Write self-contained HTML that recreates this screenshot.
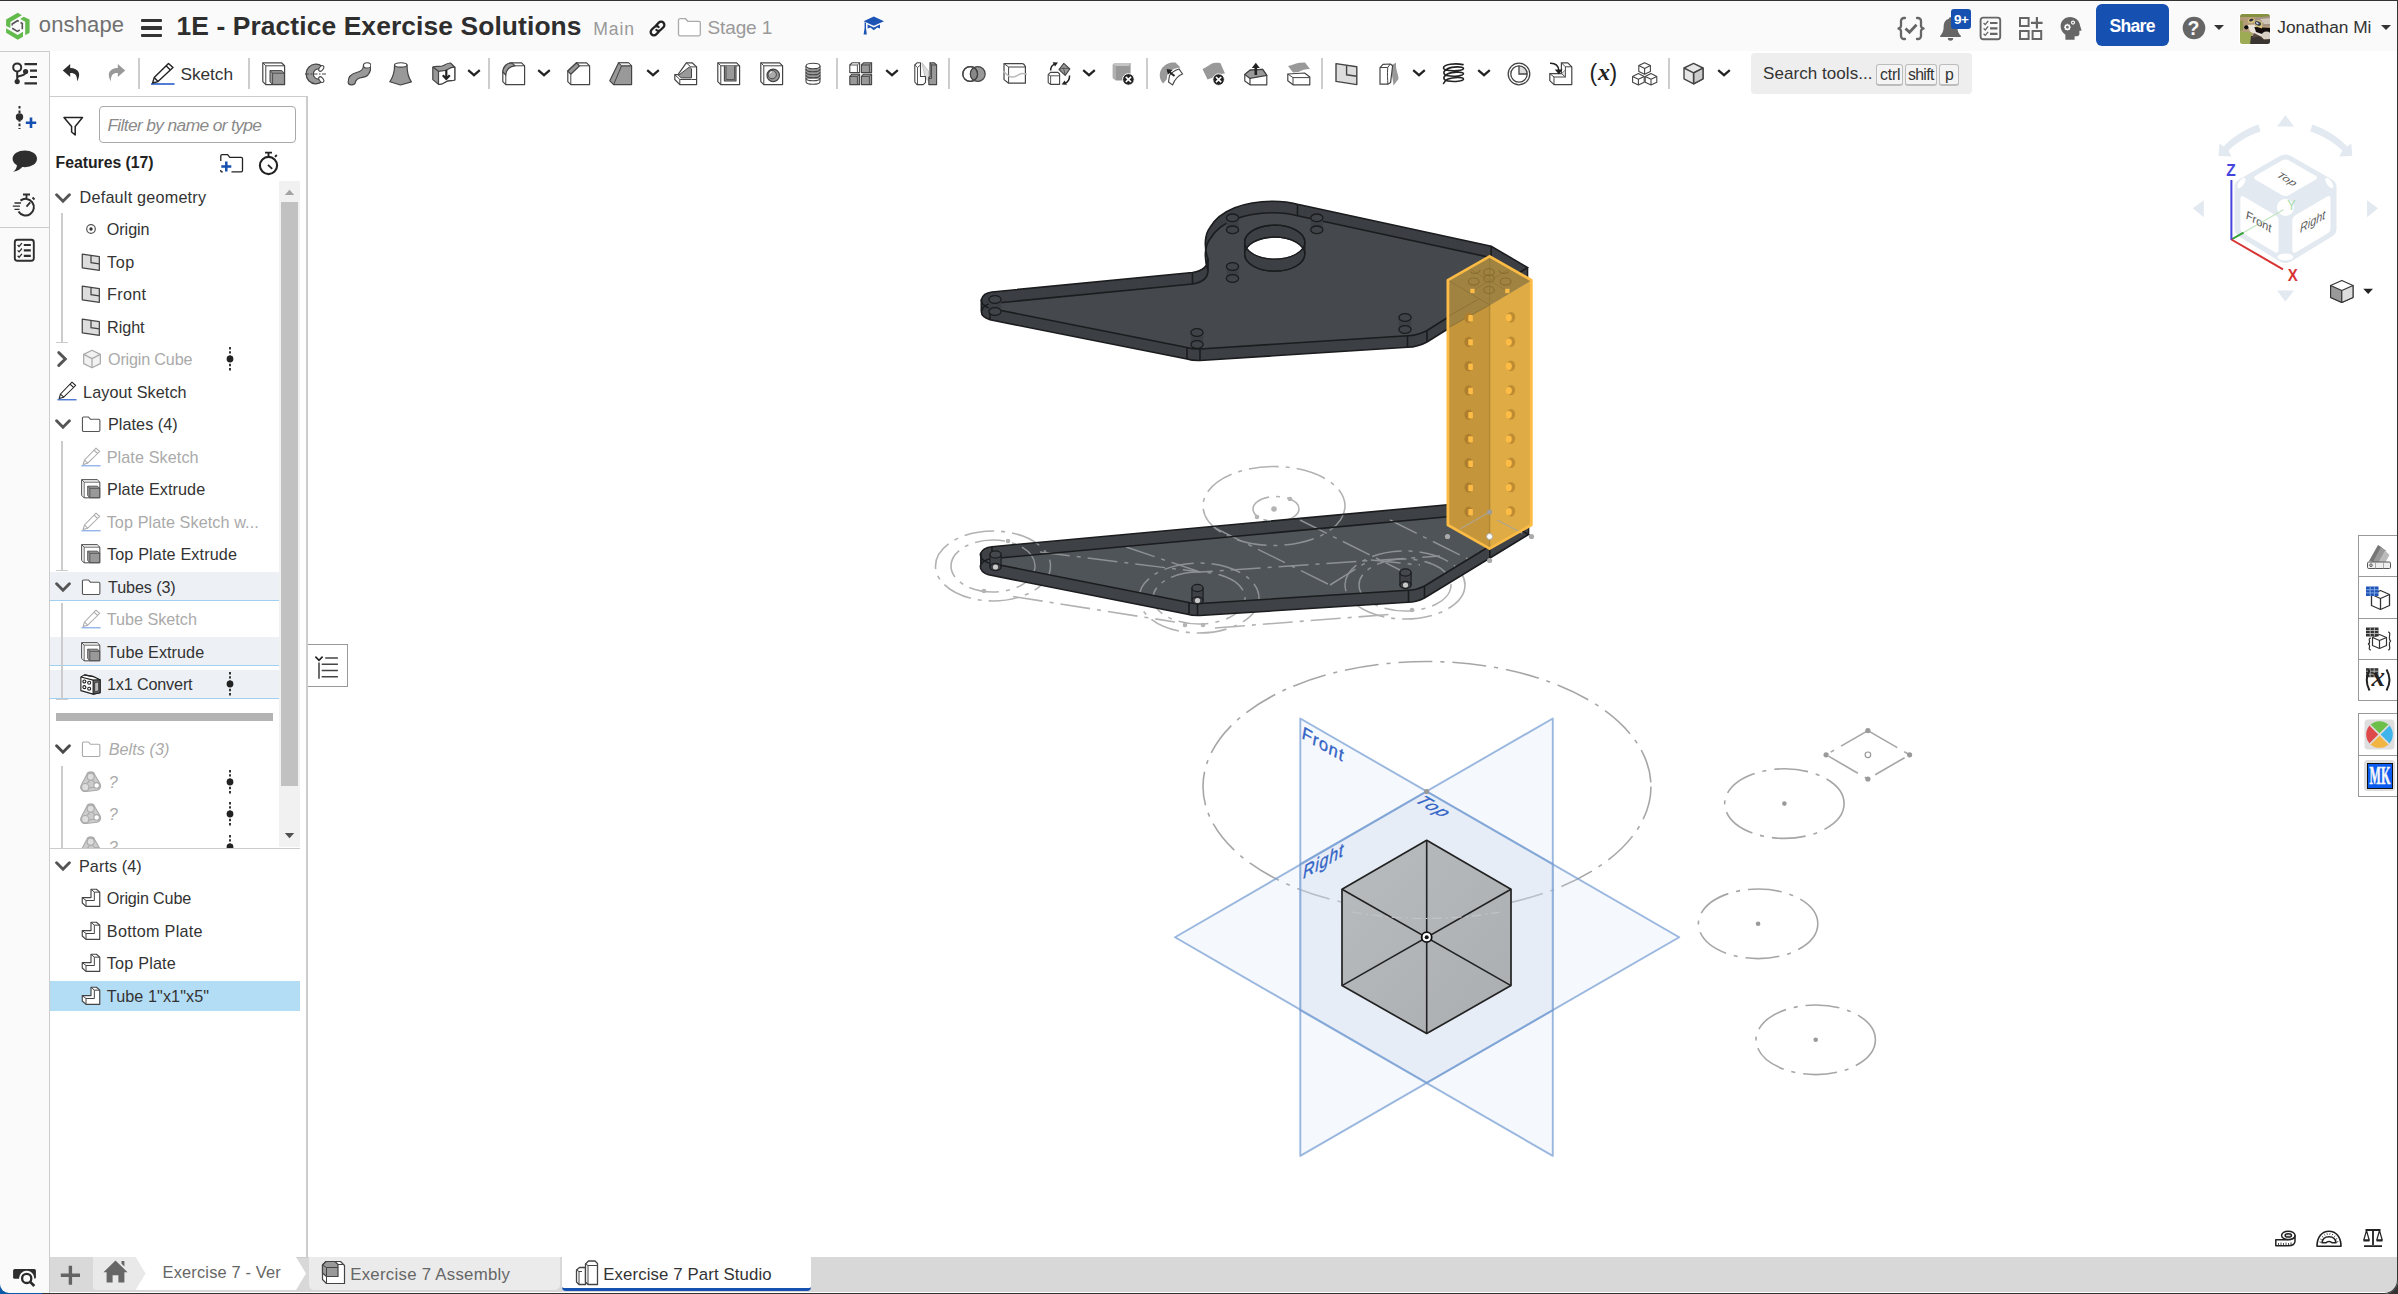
<!DOCTYPE html>
<html lang="en"><head><meta charset="utf-8"><title>1E - Practice Exercise Solutions | Exercise 7 Part Studio</title>
<style>
html,body{margin:0;padding:0}
body{width:2398px;height:1294px;position:relative;overflow:hidden;background:#fff;font-family:"Liberation Sans",sans-serif;color:#333}
.abs{position:absolute;display:block}
.t{position:absolute;white-space:pre;line-height:normal}
#hdrbg{left:0;top:0;width:2398px;height:51px;background:#fafafa}
#railbg{left:0;top:51px;width:49px;height:1241px;background:#fafafa;border-right:1.300px solid #ccc;border-top:1.300px solid #ccc}
#panelbg{left:50px;top:96px;width:256px;height:1160px;background:#fff;border-top:1.300px solid #ccc;border-right:2px solid #ccc;border-bottom:1.300px solid #ccc}
#tabbg{left:50px;top:1257px;width:2348px;height:35px;background:#d8d8d8}
.caret{width:0;height:0;border-left:5px solid transparent;border-right:5px solid transparent;border-top:5.500px solid #333}
.kbd{background:#f4f4f4;border:1px solid #bdbdbd;border-bottom-width:2px;border-radius:3px;box-sizing:border-box}
#frame{left:0;top:0;width:2398px;height:1294px;box-sizing:border-box;border-top:1.200px solid #333;border-right:1.300px solid #333;border-bottom:1.600px solid #333;border-radius:0 0 14px 0;pointer-events:none;box-shadow:0 0 0 20px #333}
#blc{left:0;top:1284px;width:12px;height:10px;background:#0b5aa8}
#blc2{left:0.300px;top:1270px;width:30px;height:22.600px;background:#fafafa;border-radius:0 0 0 9px}
#blc3{left:0;top:1292.600px;width:42px;height:1.400px;background:#0b5aa8}
</style></head>
<body>
<div class="abs" id="hdrbg"></div><div class="abs" id="tabbg"></div><div class="abs" id="railbg"></div><div class="abs" id="blc"></div><div class="abs" id="blc2"></div><div class="abs" id="panelbg"></div>
<div id="hdr"><svg class="abs" style="left:0;top:0" width="60" height="51" viewBox="0 0 60 51">
<g fill="#63bb4e"><polygon points="17.7,12.8 21.9,15.3 10.4,22 10.4,28.1 6.1,25.9 6.1,19.4"/>
<polygon points="23.7,16.8 29.6,19.6 29.6,32.8 25.2,35.3 25.2,21.7 20.2,19.1"/>
<polygon points="6.1,28.3 17.7,34.9 23,31.8 23,36.7 17.7,39.8 6.1,32.8"/></g>
<g fill="none" stroke="#555" stroke-width="1.6"><polyline points="12.2,25.5 12.2,24 17.4,20.7 18.8,21.3"/>
<polyline points="20.5,22.6 22.3,23.4 22.3,29.3"/><polyline points="12.2,28.3 17.4,31.4 19.8,30"/></g></svg><span class="t" style="left:38.80px;top:12.09px;font-size:22px;letter-spacing:0.130px;color:#707070;">onshape</span><div class="abs" style="left:141px;top:19px;width:21px;height:3.4px;background:#333;border-radius:1px"></div><div class="abs" style="left:141px;top:26.3px;width:21px;height:3.4px;background:#333;border-radius:1px"></div><div class="abs" style="left:141px;top:33.5px;width:21px;height:3.4px;background:#333;border-radius:1px"></div><span class="t" style="left:176.50px;top:11.31px;font-size:26.4px;font-weight:bold;letter-spacing:0.100px;color:#2e2e2e;">1E - Practice Exercise Solutions</span><span class="t" style="left:593.30px;top:19.27px;font-size:17.6px;letter-spacing:0.853px;color:#999;">Main</span><svg class="abs" style="left:647px;top:18px" width="21" height="21" viewBox="0 0 21 21"><g fill="none" stroke="#222" stroke-width="2.3" stroke-linecap="round">
<path d="M9.2 7.2 L11.8 4.6 a3.2 3.2 0 0 1 4.6 4.6 L13.8 11.8 a3.2 3.2 0 0 1 -4.4 0.2"/>
<path d="M11.8 13.8 L9.2 16.4 a3.2 3.2 0 0 1 -4.6 -4.6 L7.2 9.2 a3.2 3.2 0 0 1 4.4 -0.2"/></g></svg><svg class="abs" style="left:677px;top:17px" width="26" height="21" viewBox="0 0 26 21"><path d="M1.5 3.2 a1.5 1.5 0 0 1 1.5 -1.5 h5.5 l2.3 2.6 h11 a1.5 1.5 0 0 1 1.5 1.5 v11.5 a1.5 1.5 0 0 1 -1.5 1.5 h-18.8 a1.5 1.5 0 0 1 -1.5 -1.5 z" fill="#fff" stroke="#a9a9a9" stroke-width="1.3"/></svg><span class="t" style="left:707.50px;top:16.70px;font-size:19px;letter-spacing:-0.117px;color:#999;">Stage 1</span><svg class="abs" style="left:862px;top:15px" width="24" height="22" viewBox="0 0 24 22"><g fill="#1b54b5"><polygon points="11.8,1.6 22,6.2 11.8,10.8 1.6,6.2"/>
<path d="M5.6 9.6 L11.8 12.4 L18 9.6 V13.6 L15.2 12.6 L11.8 15.2 L8.4 12.6 L5.6 13.6 Z"/><path d="M2.6 7.2 L4 7.8 V13 L4.8 19.5 H1.6 L2.6 13 Z"/></g></svg><svg class="abs" style="left:1896px;top:15px" width="30" height="28" viewBox="0 0 30 28"><g fill="none" stroke="#666" stroke-width="2.3" stroke-linecap="round" stroke-linejoin="round">
<path d="M9 3 H8 a3 3 0 0 0 -3 3 v4 a3 3 0 0 1 -2.5 3.5 a3 3 0 0 1 2.5 3.5 v4 a3 3 0 0 0 3 3 h1"/>
<path d="M21 3 h1 a3 3 0 0 1 3 3 v4 a3 3 0 0 0 2.5 3.5 a3 3 0 0 0 -2.5 3.5 v4 a3 3 0 0 1 -3 3 h-1"/></g>
<path d="M9.5 13.5 L13.5 17.3 L20.5 9.8" fill="none" stroke="#666" stroke-width="2.8"/></svg><svg class="abs" style="left:1938px;top:15px" width="26" height="28" viewBox="0 0 26 28"><path d="M12.5 2.2 c1 0 1.6 .7 1.6 1.6 c3.6 1 5.2 4 5.2 7.6 c0 4.6 1.3 7 3.5 9.3 v1.3 H2.2 v-1.3 c2.2 -2.3 3.5 -4.7 3.5 -9.3 c0 -3.6 1.6 -6.6 5.2 -7.6 c0 -.9 .6 -1.6 1.6 -1.6 z M9.8 23 h5.4 a2.7 2.7 0 0 1 -5.4 0z" fill="#666"/></svg><div class="abs" style="left:1951px;top:9px;width:20px;height:20px;background:#1650b0;border-radius:3px"></div><span class="t" style="left:1954.00px;top:11.98px;font-size:13.5px;font-weight:bold;letter-spacing:-0.406px;color:#fff;">9+</span><svg class="abs" style="left:1979px;top:16px" width="23" height="25" viewBox="0 0 23 25"><rect x="1.6" y="1.6" width="19.6" height="21.6" rx="2.5" fill="none" stroke="#666" stroke-width="1.9"/>
<g stroke="#666" stroke-width="2.2"><path d="M11 7 h7.5 M11 12.4 h7.5 M11 17.8 h7.5"/></g>
<g fill="none" stroke="#666" stroke-width="1.3"><path d="M4.6 7 l1.6 1.6 l3 -3.6 M4.6 12.4 l1.6 1.6 l3 -3.6 M4.6 17.8 l1.6 1.6 l3 -3.6"/></g></svg><svg class="abs" style="left:2018px;top:16px" width="26" height="25" viewBox="0 0 26 25"><g fill="none" stroke="#666" stroke-width="2"><rect x="2" y="2" width="8.6" height="8" /><rect x="2" y="15" width="8.6" height="8"/><rect x="14.6" y="15" width="8.6" height="8"/></g>
<path d="M18.9 1 v11.6 M13 6.8 h11.6" stroke="#666" stroke-width="2.2" fill="none"/></svg><svg class="abs" style="left:2059px;top:15px" width="24" height="27" viewBox="0 0 24 27"><path d="M11 2 c5.5 0 9.6 3.6 10 8.6 l1.4 4.2 c.2 .6 -.1 1 -.8 1 h-1.2 v3 c0 1.6 -.9 2.4 -2.4 2.4 h-2.4 v3.6 H6.4 v-5 C3.4 17.600 1.600 14.600 1.600 11.200 C1.600 6 5.600 2 11 2 z" fill="#666"/>
<circle cx="8.4" cy="12.2" r="2.1" fill="none" stroke="#fafafa" stroke-width="1.5"/><circle cx="14" cy="7.6" r="1.5" fill="none" stroke="#fafafa" stroke-width="1.2"/>
<g stroke="#fafafa" stroke-width="1.1"><path d="M8.4 8.8v1 M8.4 14.600v1 M5 12.200h1 M10.800 12.200h1 M6 9.800l.7 .7 M10.100 13.900l.7 .7 M6 14.600l.7 -.7 M10.100 10.500l.7 -.7"/></g></svg><div class="abs" style="left:2096px;top:4px;width:73px;height:42px;background:#1650b0;border-radius:6px"></div><span class="t" style="left:2109.50px;top:16.27px;font-size:17.6px;font-weight:bold;letter-spacing:-0.727px;color:#fff;">Share</span><svg class="abs" style="left:2181px;top:15px" width="26" height="26" viewBox="0 0 26 26"><circle cx="13" cy="13" r="11.3" fill="#666"/></svg><span class="t" style="left:2187.60px;top:17.35px;font-size:19.5px;font-weight:bold;color:#fafafa;">?</span><div class="abs caret" style="left:2214px;top:25px"></div><svg class="abs" style="left:2239px;top:13px" width="32" height="32" viewBox="-1 -1 32 32"><defs><clipPath id="avc"><rect width="30" height="30" rx="2.500"/></clipPath><filter id="avb" x="-10%" y="-10%" width="120%" height="120%"><feGaussianBlur stdDeviation="0.450"/></filter></defs>
<rect x="-1" y="-1" width="32" height="32" rx="3.500" fill="#fff"/><g clip-path="url(#avc)"><g filter="url(#avb)"><rect x="-2" y="-2" width="34" height="34" fill="#b39d78"/><rect x="-2" y="-2" width="34" height="5" fill="#86913f"/><path d="M-2 17 L12 19 L10 32 L-2 32 Z" fill="#9dab55"/><path d="M-2 8 L3 6 L3 16 L-2 18Z" fill="#8f9a4a"/>
<path d="M13 4 L31 2 L31 12 L22 12 L14 9 Z" fill="#a39282"/><path d="M20 5 L31 4 L31 10 L24 10 Z" fill="#cfc5b8"/>
<path d="M7.500 11 L14.500 10.500 L19 18 L24 20 L20 23 L10 17.500 Z" fill="#eae3da"/>
<path d="M14.400 13 L23 13.500 L31 14 L31 19 L22 20 L16 18 Z" fill="#121110"/>
<ellipse cx="26.500" cy="21.500" rx="5" ry="4" fill="#d9d0c5"/><path d="M11 22 L20 22 L24 25.500 L31 25 L31 31 L10 31 Z" fill="#3b3531"/><path d="M14 19 L20 22 L12 24 Z" fill="#5a4b42"/>
<circle cx="6.300" cy="13.300" r="2.100" fill="#0e0d0d"/>
<ellipse cx="11.300" cy="6.400" rx="3.600" ry="2.400" fill="#dcc681" transform="rotate(-18 11.300 6.400)"/><ellipse cx="11.300" cy="6" rx="2.300" ry="1.200" fill="#2d2d38" transform="rotate(-18 11.300 6)"/>
<path d="M13.500 8 L18.500 5.800 L22.500 8.500 L22 14.500 L16.500 12.500 Z" fill="#dcc681"/><ellipse cx="18" cy="9.400" rx="3.300" ry="2.100" fill="#39424f" transform="rotate(25 18 9.400)"/><ellipse cx="17.300" cy="9.200" rx="1.500" ry=".9" fill="#c4d0dc" transform="rotate(25 17.300 9.200)"/></g></g></svg><span class="t" style="left:2277.30px;top:16.94px;font-size:17.3px;">Jonathan Mi</span><div class="abs caret" style="left:2381px;top:25px"></div></div>
<div id="tb"><svg class="abs" style="left:62px;top:63px" width="20" height="20" viewBox="0 0 20 20"><path d="M8.200 1 L0.800 7.500 L8.200 14 V10 C12.500 9.800 15.500 11.500 15 18.500 C19.500 11 17 5.200 8.200 5 Z" fill="#2e2e2e"/></svg><svg class="abs" style="left:106px;top:63px" width="20" height="20" viewBox="0 0 20 20"><path d="M11.800 1 L19.200 7.500 L11.800 14 V10 C7.500 9.800 4.500 11.500 5 18.500 C0.500 11 3 5.200 11.800 5 Z" fill="#999"/></svg><div class="abs" style="left:138.0px;top:57.500px;width:2px;height:31.500px;background:#cdcdcd"></div><svg class="abs" style="left:150px;top:62px" width="26" height="24" viewBox="0 0 26 24"><path d="M1 22 H24.500" stroke="#3f6fd0" stroke-width="1.800"/><g fill="none" stroke="#222" stroke-width="1.400" stroke-linejoin="round"><path d="M18.500 1.400 L23 5.600 L8 19.600 L2.600 21 L4.200 15.600 Z"/><path d="M4.200 15.600 L8 19.600 M16 3.800 L20.400 8"/></g></svg><span class="t" style="left:180.50px;top:64.34px;font-size:17.3px;letter-spacing:-0.069px;">Sketch</span><div class="abs" style="left:248.0px;top:57.500px;width:2px;height:31.500px;background:#cdcdcd"></div><svg class="abs" style="left:262px;top:62px" width="24" height="24" viewBox="0 0 24 24" ><g stroke="#444" stroke-width="1.2" fill="#fff" stroke-linejoin="round"><polygon points="0.8,0.8 19.5,0.8 22.6,3.8 22.6,22.6 3.8,22.6 0.8,19.6"/><path d="M0.8 0.800L3.800 3.800H22.600M3.800 3.800V22.600" fill="none" stroke-width="1"/>
<polygon points="8,8.600 19.800,8.600 22.400,11.200 22.400,22.400 10.600,22.400 8,19.800" fill="#999" stroke-width="1"/><path d="M8 8.600L10.600 11.200H22.400M10.600 11.200V22.400" fill="none" stroke-width=".9"/></g></svg><svg class="abs" style="left:304px;top:62px" width="24" height="24" viewBox="0 0 24 24" ><path d="M18.200 4.500 A9.800 9.800 0 1 0 18.200 19.500 L14.500 17.200 A4.800 4.800 0 1 1 14.500 6.800 Z" fill="#999" stroke="#444" stroke-width="1.200" stroke-linejoin="round"/>
<ellipse cx="17.300" cy="6.400" rx="3.300" ry="1.900" transform="rotate(-52 17.300 6.400)" fill="#fff" stroke="#444" stroke-width="1"/><ellipse cx="17.300" cy="17.600" rx="3.300" ry="1.900" transform="rotate(52 17.300 17.600)" fill="#fff" stroke="#444" stroke-width="1"/>
<path d="M1 12 H22.500" stroke="#444" stroke-width="1" stroke-dasharray="4 1.500 1.500 1.500" fill="none"/></svg><svg class="abs" style="left:347px;top:62px" width="24" height="24" viewBox="0 0 24 24" ><path d="M16.500 3.200 C16.500 8 14 9.500 9.500 10.500 C4 11.800 1 15.500 1.200 20.500 C1.400 23.600 7.600 23.600 8.300 20.600 C8.800 17.500 11 16 15.500 15.400 C21 14.600 24 10 23.800 3.200 Z" fill="#999" stroke="#444" stroke-width="1.200"/><ellipse cx="20.200" cy="3.400" rx="3.700" ry="2.600" fill="#fff" stroke="#444" stroke-width="1.100"/></svg><svg class="abs" style="left:389px;top:62px" width="24" height="24" viewBox="0 0 24 24" ><path d="M5.600 2.800 C5.600 10 3.500 16 0.800 19.800 L11.500 23 L22.400 19.800 C19.500 16 18 10 18 2.800 Z" fill="#999" stroke="#444" stroke-width="1.200" stroke-linejoin="round"/><ellipse cx="11.800" cy="2.900" rx="6.200" ry="2.200" fill="#fff" stroke="#444" stroke-width="1.100"/></svg><svg class="abs" style="left:432px;top:62px" width="24" height="24" viewBox="0 0 24 24" ><g stroke="#444" stroke-width="1.200" stroke-linejoin="round"><path d="M0.800 5 C5 3.500 8 5.500 11.500 3.500 C14 2 16.500 0.800 18.500 1 L22.800 5.200 V18 C19 19.500 17 17.500 13.500 20 C11 21.800 8 22.500 6.500 22.300 L0.800 17.600 Z" fill="#999"/>
<path d="M6.500 9.300 C10 8.500 12 9.500 15.500 7.500 C18 6 20.500 5 22.800 5.200 V18 C19 19.500 17 17.500 13.500 20 C11 21.800 8 22.500 6.500 22.300 Z" fill="#fff"/><path d="M0.800 5 L6.500 9.300" fill="none"/></g>
<path d="M14.300 8 V16.500 M10.800 13.200 L14.300 17 L17.800 13.200" stroke="#222" stroke-width="2.200" fill="none"/></svg><svg class="abs" style="left:502px;top:62px" width="24" height="24" viewBox="0 0 24 24" ><g stroke="#444" stroke-width="1.200" stroke-linejoin="round"><path d="M10 0.800 H19.600 L22.600 3.800 V22.600 H3.800 L0.800 19.600 V10 A9.200 9.200 0 0 1 10 0.800 Z" fill="#fff"/><path d="M10 0.800 A9.200 9.200 0 0 0 0.800 10 L3.800 13 A9.200 9.200 0 0 1 13 3.800 Z" fill="#999"/><path d="M13 3.800 H22.600 M3.800 13 V22.600" fill="none" stroke-width="1"/></g></svg><svg class="abs" style="left:566.5px;top:62px" width="24" height="24" viewBox="0 0 24 24" ><g stroke="#444" stroke-width="1.200" stroke-linejoin="round"><polygon points="9.600,0.800 19.600,0.800 22.600,3.800 22.600,22.600 3.800,22.600 0.800,19.600 0.800,9" fill="#fff"/><polygon points="9.600,0.800 0.800,9 3.800,12.200 12.600,3.800" fill="#999"/><path d="M12.600 3.800 H22.600 M3.800 12.200 V22.600" fill="none" stroke-width="1"/></g></svg><svg class="abs" style="left:609px;top:62px" width="24" height="24" viewBox="0 0 24 24" ><g stroke="#444" stroke-width="1.200" stroke-linejoin="round"><polygon points="9.600,0.800 19.600,0.800 22.600,3.800 22.600,22.600 4.600,22.600 0.800,18.800" fill="#999"/><path d="M12.600 3.800 H22.600 M12.600 3.800 L4.600 22.600 M9.600 0.800 L12.600 3.800" fill="none" stroke-width="1"/><polygon points="9.600,0.800 19.600,0.800 22.600,3.800 12.600,3.800" fill="#eee" stroke-width="1"/></g></svg><svg class="abs" style="left:674px;top:62px" width="24" height="24" viewBox="0 0 24 24" ><g stroke="#444" stroke-width="1.200" stroke-linejoin="round"><polygon points="12.300,0.800 18.100,0.800 22.600,4.900 22.600,22.600 5.800,22.600 0.800,17.500 0.800,12.700 4,12.700" fill="#fff"/><polygon points="15.500,4.900 17.500,6.900 17.500,15.900 7.100,15.900 4.500,13.300" fill="#999" stroke-width="1"/><path d="M12.300 0.800 L16.800 4.900 H22.600 M0.800 12.700 L5.800 17.500 V22.600 M5.800 17.500 H17.500 L22.600 17.500" fill="none" stroke-width="1"/></g></svg><svg class="abs" style="left:717px;top:62px" width="24" height="24" viewBox="0 0 24 24" ><g stroke="#444" stroke-width="1.200" stroke-linejoin="round"><polygon points="0.800,0.800 19.600,0.800 22.600,3.800 22.600,22.600 3.800,22.600 0.800,19.600" fill="#fff"/><path d="M0.800 0.800 L3.800 3.800 H22.600 M3.800 3.800 V22.600" fill="none" stroke-width="1"/><path d="M7.400 3.800 V19 H19 V3.800" fill="#999" stroke-width="1.100"/><path d="M9 3.800 V17.500 H17.500 V3.800" fill="none" stroke-width=".8"/></g></svg><svg class="abs" style="left:759.5px;top:62px" width="24" height="24" viewBox="0 0 24 24" ><g stroke="#444" stroke-width="1.200" stroke-linejoin="round"><polygon points="0.800,0.800 19.600,0.800 22.600,3.800 22.600,22.600 3.800,22.600 0.800,19.600" fill="#fff"/><path d="M0.800 0.800 L3.800 3.800 H22.600 M3.800 3.800 V22.600" fill="none" stroke-width="1"/><circle cx="13.200" cy="13.400" r="6.200" fill="#999"/><circle cx="12.200" cy="12.600" r="4.200" fill="#aaa" stroke-width="1"/><path d="M10 11.500 a2.500 2.500 0 0 1 2 -1.800" stroke="#fff" stroke-width="1" fill="none"/></g></svg><svg class="abs" style="left:805px;top:62px" width="24" height="24" viewBox="0 0 24 24" ><g stroke="#444" stroke-width="1.100"><path d="M1 4 V19.500 A7 2.800 0 0 0 15 19.500 V4" fill="#fff"/><rect x="1" y="6.500" width="14" height="10.500" fill="#999" stroke="none"/><ellipse cx="8" cy="4" rx="7" ry="2.800" fill="#fff"/><path d="M1 7 A7 2.800 0 0 0 15 7 M1 10 A7 2.800 0 0 0 15 10 M1 13 A7 2.800 0 0 0 15 13 M1 16 A7 2.800 0 0 0 15 16" fill="none"/></g></svg><svg class="abs" style="left:849px;top:62px" width="24" height="24" viewBox="0 0 24 24" ><g stroke="#444" stroke-width="1.100" stroke-linejoin="round"><polygon points="0.800,3 3,0.800 10.600,0.800 10.600,10.600 0.800,10.600" fill="#fff"/><path d="M0.800 3 H8.400 V10.600 M8.400 3 L10.600 0.800" fill="none" stroke-width=".9"/>
<polygon points="12.400,3 14.600,0.800 22.600,0.800 22.600,10.600 12.400,10.600" fill="#999"/><polygon points="0.800,14.400 3,12.200 10.600,12.200 10.600,22.600 0.800,22.600" fill="#999"/><polygon points="12.400,14.400 14.600,12.200 22.600,12.200 22.600,22.600 12.400,22.600" fill="#999"/>
<path d="M12.400 3 H20.400 V10.600 M20.400 3 L22.600 0.800 M0.800 14.400 H8.400 V22.600 M8.400 14.400 L10.600 12.200 M12.400 14.400 H20.400 V22.600 M20.400 14.400 L22.600 12.200" fill="none" stroke-width=".9"/></g></svg><svg class="abs" style="left:914px;top:62px" width="24" height="24" viewBox="0 0 24 24" ><g stroke="#444" stroke-width="1.100" stroke-linejoin="round"><polygon points="8,0.800 14.500,9 14.500,19 11,15.500" fill="#ddd" stroke="#bbb" stroke-width=".8"/><polygon points="0.800,3 3,0.800 6.500,0.800 6.500,14.500 11.500,14.500 11.500,20.400 9.300,22.600 3,22.600 0.800,20" fill="#fff"/><path d="M0.800 3 L3.500 5.500 V22.600 M3.500 5.500 L6.500 3" fill="none" stroke-width=".9"/>
<polygon points="16,0.800 20.400,0.800 22.600,3 22.600,22.600 14.800,22.600 14.800,15.500 16,14.500" fill="#999"/><path d="M17.500 3 V16.500 H14.800 M17.500 3 L16 0.800 M17.500 3 H22.600" fill="none" stroke-width=".9"/></g></svg><svg class="abs" style="left:961.5px;top:62px" width="24" height="24" viewBox="0 0 24 24" ><g stroke="#444" stroke-width="1.200"><circle cx="8.200" cy="12" r="7.400" fill="#fff"/><circle cx="15.800" cy="12" r="7.400" fill="#999"/><path d="M12 5.650 A7.400 7.400 0 0 0 12 18.350 A7.400 7.400 0 0 0 12 5.650Z" fill="#888"/><circle cx="8.200" cy="12" r="7.400" fill="none"/></g></svg><svg class="abs" style="left:1003px;top:62px" width="24" height="24" viewBox="0 0 24 24" ><g stroke="#444" stroke-width="1.200" stroke-linejoin="round"><path d="M1 1.600 H19.500 Q21 1.600 22.400 4.600 V21.200 H5.600 L1 17.600 Z" fill="#fff"/><path d="M1 1.600 L5.600 5 H22.400 M5.600 5 V21.200" fill="none" stroke-width="1"/></g><path d="M0 9.500 C3 10.500 4.500 14.500 8 15 C13 15.700 15 12 19 11.600 C21 11.400 22.500 12 24 12.300" fill="none" stroke="#bbb" stroke-width="1.500"/></svg><svg class="abs" style="left:1046.5px;top:62px" width="24" height="24" viewBox="0 0 24 24" ><g stroke="#444" stroke-width="1.100" stroke-linejoin="round"><polygon points="1.200,12.600 3.400,10.400 11,10.400 12.600,12 12.600,22.400 3.400,22.400 1.200,20.600" fill="#fff"/><path d="M1.200 12.600 L3.600 13.800 H12.600 M3.600 13.800 V22.400" fill="none" stroke-width=".9"/><polygon points="16.800,1.400 22.800,7 18.200,13.400 12,7.600" fill="#999"/><path d="M12 7.600 L16.500 6 L22.800 7 M16.500 6 L18.200 13.400" fill="none" stroke-width=".8"/></g>
<path d="M3.600 8.600 C3.600 5 5.500 2.600 8.600 1.600" fill="none" stroke="#222" stroke-width="1.500"/><polygon points="5.600,0.200 11,0.600 8,4.600" fill="#222"/><path d="M22.600 13.600 C22.600 17.500 20.500 20.500 17.500 21.600" fill="none" stroke="#222" stroke-width="1.500"/><polygon points="20,22.800 14.600,22.600 17.600,18.600" fill="#222"/></svg><svg class="abs" style="left:1112px;top:62px" width="24" height="24" viewBox="0 0 24 24" ><polygon points="0.800,2.600 2.800,1 18.600,1 18.600,18.400 4,18.400 0.800,16" fill="#999"/><polygon points="0.800,2.600 2.800,1 18.600,1 17,4 4,4" fill="#c4c4c4"/><polygon points="0.800,2.600 4,4 4,18.400 0.800,16" fill="#b0b0b0"/><circle cx="16.400" cy="17.400" r="5.800" fill="#222" stroke="#fff" stroke-width="1"/><path d="M13.800 14.800 L19 20 M19 14.800 L13.800 20" stroke="#fff" stroke-width="1.700" fill="none"/></svg><svg class="abs" style="left:1158px;top:62px" width="26" height="24" viewBox="0 0 26 24" ><path d="M5 21.500 C-1.500 14 2 3 13.500 0.600 L17.500 0.400 L22.500 5.500 C13 6.500 8.500 11 9 17 Z" fill="#999"/><path d="M11.500 13.500 C14 9.500 17 8.400 21 7 L24.500 12 C20 13.500 17 17 14.500 23 L10.500 20 Z" fill="#fff" stroke="#444" stroke-width="1.100"/><path d="M9.500 8.500 L16.500 14" stroke="#222" stroke-width="2" fill="none"/><polygon points="8.600,7 14.600,8 10,12.500" fill="#222"/></svg><svg class="abs" style="left:1202px;top:62px" width="24" height="24" viewBox="0 0 24 24" ><path d="M0.500 7 C5 5.500 8 1.500 12 1 C14 0.700 17 0.800 18.500 1.200 L23 11.500 C20 11.500 16 12.500 14 14.500 L5.500 17.500 Z" fill="#999"/><circle cx="16.600" cy="17.600" r="5.800" fill="#222" stroke="#fff" stroke-width="1"/><path d="M14 15 L19.200 20.200 M19.200 15 L14 20.200" stroke="#fff" stroke-width="1.700" fill="none"/></svg><svg class="abs" style="left:1243.5px;top:62px" width="24" height="24" viewBox="0 0 24 24" ><g stroke="#444" stroke-width="1.200" stroke-linejoin="round"><polygon points="0.800,12.400 6,8.200 18.600,7.400 22.800,13.400 22.800,22.800 6,22.800 0.800,19" fill="#fff"/><polygon points="0.800,12.400 6,8.200 18.600,7.400 22.800,13.400 6,16.400" fill="#999"/><path d="M6 16.400 V22.800" fill="none"/></g><path d="M11.800 5.500 V13" stroke="#222" stroke-width="2.600"/><polygon points="11.800,0.800 15.800,6 7.800,6" fill="#222"/></svg><svg class="abs" style="left:1286.5px;top:62px" width="24" height="24" viewBox="0 0 24 24" ><path d="M1 4 C5 3.500 9 1 13 0.800 L18 0.600 L23 7 C18 7 15 8 11.500 10 L6 10.500 Z" fill="#999"/><g stroke="#444" stroke-width="1.200" stroke-linejoin="round"><polygon points="0.800,12 17.600,11 22.800,15 22.800,22.800 6,22.800 0.800,18.800" fill="#fff"/><path d="M0.800 12 L6 15.600 H22.800 M6 15.600 V22.800" fill="none" stroke-width="1"/></g></svg><svg class="abs" style="left:1335px;top:62px" width="24" height="24" viewBox="0 0 24 24" ><polygon points="1,1.600 21.800,4.800 21.800,22.600 1,19.400" fill="#ddd" stroke="#444" stroke-width="1.400" stroke-linejoin="round"/><path d="M11.600 3.400 V12.800 L21.800 14.200" fill="none" stroke="#444" stroke-width="1.400"/></svg><svg class="abs" style="left:1379px;top:62px" width="24" height="24" viewBox="0 0 24 24" ><path d="M13.500 2.500 L17 0.800 C16.500 8 19.500 12 19.500 17 L14.500 23.500 C14 17 11.500 10 13.500 2.500 Z" fill="#999"/><g stroke="#444" stroke-width="1.200" stroke-linejoin="round"><polygon points="1,5.600 4,2.400 11.400,2 13.600,3.800 11.600,20.400 8.800,22.200 1,22.200" fill="#fff"/><path d="M1 5.600 L8.800 5.400 L11.400 2 M8.800 5.400 C8 12 8.800 18 8.800 22.200" fill="none" stroke-width="1"/></g></svg><svg class="abs" style="left:1442px;top:62px" width="24" height="24" viewBox="0 0 24 24" ><g fill="none" stroke="#222" stroke-width="1.600" stroke-linecap="round"><path d="M21 2.600 C13 0.800 1.500 2.500 1.500 6 C1.500 9.500 21.500 9.500 21.500 6.600 C21.500 4.200 10 4.500 6 6.500 C0 9.500 1 13 6 13.800 C12 14.800 21.500 14 21.500 11.600 C21.500 9.400 10 9.800 6 11.800 C0 14.800 1 18.300 6 19 C12 20 21.500 19.300 21.500 17 C21.500 14.800 11 15 6 17 C3.500 18 2.500 19.500 1.500 21.500"/></g></svg><svg class="abs" style="left:1507px;top:62px" width="24" height="24" viewBox="0 0 24 24" ><circle cx="12" cy="12" r="10.800" fill="#fff" stroke="#444" stroke-width="1.300"/><path d="M12 12 V3.800 A8.200 8.200 0 0 1 20.200 12 Z" fill="#ddd"/><circle cx="12" cy="12" r="8.200" fill="none" stroke="#444" stroke-width="1.300"/><path d="M12 3.800 V12 H20.200" fill="none" stroke="#444" stroke-width="1.300"/></svg><svg class="abs" style="left:1548.5px;top:62px" width="24" height="24" viewBox="0 0 24 24" ><g stroke="#444" stroke-width="1.200" stroke-linejoin="round"><polygon points="12.400,0.800 18.800,0.800 22.800,4.800 22.800,22.600 5,22.600 0.800,18.600 0.800,11.600 4,11.600 12.400,11.600" fill="#fff"/><path d="M12.400 0.800 L16.400 4.800 H22.800 M16.400 4.800 V15 H5 V22.600 M5 15 L0.800 11.600 M16.400 15 L12.400 11.600" fill="none" stroke-width="1"/><polygon points="12.400,11.600 16.400,15 16.400,8" fill="#ddd" stroke-width=".6"/></g><path d="M1 1.200 C6 1 9.500 3.500 9.800 8.500" fill="none" stroke="#222" stroke-width="1.500"/><polygon points="5.800,7.400 13.600,7.400 9.800,12.200" fill="#222"/></svg><svg class="abs" style="left:1632px;top:62px" width="26" height="24" viewBox="0 0 26 24" ><g stroke="#444" stroke-width="1.100" stroke-linejoin="round" fill="#fff"><polygon points="12.600,0.800 18.400,3.600 18.400,9.400 12.600,12.200 6.800,9.400 6.800,3.600"/><path d="M6.800 3.600 L12.600 6.400 L18.400 3.600 M12.600 6.400 V12.200" fill="none"/>
<polygon points="6.400,11.600 12.200,14.400 12.200,20.200 6.400,23 0.600,20.200 0.600,14.400"/><path d="M0.600 14.400 L6.400 17.200 L12.200 14.400 M6.400 17.200 V23" fill="none"/>
<polygon points="19,11.600 24.800,14.400 24.800,20.200 19,23 13.200,20.200 13.200,14.400"/><path d="M13.200 14.400 L19 17.200 L24.800 14.400 M19 17.200 V23" fill="none"/></g></svg><svg class="abs" style="left:1682.5px;top:62px" width="24" height="24" viewBox="0 0 24 24" ><g stroke="#444" stroke-width="1.400" stroke-linejoin="round"><polygon points="10.600,1.400 20,6 20,16.800 10.600,21.800 1,16.800 1,6" fill="#e6e6e6"/><polygon points="10.600,10.800 20,6 20,16.800 10.600,21.800" fill="#ccc"/><path d="M1 6 L10.600 10.800 L20 6 M10.600 10.800 V21.800" fill="none"/></g></svg><svg class="abs" style="left:467px;top:69.4px" width="14" height="8" viewBox="0 0 14 8"><path d="M1.200 1.200 L7 6.200 L12.800 1.200" fill="none" stroke="#222" stroke-width="2.200"/></svg><svg class="abs" style="left:537px;top:69.4px" width="14" height="8" viewBox="0 0 14 8"><path d="M1.200 1.200 L7 6.200 L12.800 1.200" fill="none" stroke="#222" stroke-width="2.200"/></svg><svg class="abs" style="left:645.5px;top:69.4px" width="14" height="8" viewBox="0 0 14 8"><path d="M1.200 1.200 L7 6.200 L12.800 1.200" fill="none" stroke="#222" stroke-width="2.200"/></svg><svg class="abs" style="left:885px;top:69.4px" width="14" height="8" viewBox="0 0 14 8"><path d="M1.200 1.200 L7 6.200 L12.800 1.200" fill="none" stroke="#222" stroke-width="2.200"/></svg><svg class="abs" style="left:1082px;top:69.4px" width="14" height="8" viewBox="0 0 14 8"><path d="M1.200 1.200 L7 6.200 L12.800 1.200" fill="none" stroke="#222" stroke-width="2.200"/></svg><svg class="abs" style="left:1412px;top:69.4px" width="14" height="8" viewBox="0 0 14 8"><path d="M1.200 1.200 L7 6.200 L12.800 1.200" fill="none" stroke="#222" stroke-width="2.200"/></svg><svg class="abs" style="left:1477px;top:69.4px" width="14" height="8" viewBox="0 0 14 8"><path d="M1.200 1.200 L7 6.200 L12.800 1.200" fill="none" stroke="#222" stroke-width="2.200"/></svg><svg class="abs" style="left:1717px;top:69.4px" width="14" height="8" viewBox="0 0 14 8"><path d="M1.200 1.200 L7 6.200 L12.800 1.200" fill="none" stroke="#222" stroke-width="2.200"/></svg><div class="abs" style="left:488.0px;top:57.500px;width:2px;height:31.500px;background:#cdcdcd"></div><div class="abs" style="left:835.7px;top:57.500px;width:2px;height:31.500px;background:#cdcdcd"></div><div class="abs" style="left:948.3px;top:57.500px;width:2px;height:31.500px;background:#cdcdcd"></div><div class="abs" style="left:1145.5px;top:57.500px;width:2px;height:31.500px;background:#cdcdcd"></div><div class="abs" style="left:1320.7px;top:57.500px;width:2px;height:31.500px;background:#cdcdcd"></div><div class="abs" style="left:1667.7px;top:57.500px;width:2px;height:31.500px;background:#cdcdcd"></div><span class="t" style="left:1589.50px;top:60.19px;font-size:23px;color:#222;">(</span><span class="t" style="left:1598.00px;top:58.62px;font-size:24px;font-weight:bold;font-style:italic;color:#222;font-family:'Liberation Serif',serif;">x</span><span class="t" style="left:1609.50px;top:60.19px;font-size:23px;color:#222;">)</span><div class="abs" style="left:1751px;top:53px;width:221px;height:41px;background:#eee;border-radius:4px"></div><span class="t" style="left:1763.00px;top:64.11px;font-size:17px;letter-spacing:0.059px;">Search tools...</span><div class="abs kbd" style="left:1876.3px;top:64.300px;width:27.2px;height:22px"></div><span class="t" style="left:1880.00px;top:65.70px;font-size:15.8px;letter-spacing:-0.188px;">ctrl</span><div class="abs kbd" style="left:1904.8px;top:64.300px;width:32.5px;height:22px"></div><span class="t" style="left:1908.00px;top:65.70px;font-size:15.8px;letter-spacing:-0.671px;">shift</span><div class="abs kbd" style="left:1938.5px;top:64.300px;width:20px;height:22px"></div><span class="t" style="left:1945.00px;top:65.70px;font-size:15.8px;">p</span></div>
<div id="rail"><svg class="abs" style="left:11px;top:61px" width="28" height="26" viewBox="0 0 28 26"><g fill="none" stroke="#2e2e2e" stroke-width="2"><circle cx="6.200" cy="6.400" r="4"/><path d="M6.200 10.400 V20 M6.200 17 C6.200 13.500 14.500 16 14.500 11"/></g><circle cx="6.200" cy="20.600" r="2.600" fill="#2e2e2e"/><circle cx="14.600" cy="10.600" r="2.600" fill="#2e2e2e"/><g stroke="#2e2e2e" stroke-width="2.200"><path d="M13.500 3.200 H26 M19 9.600 H26 M19 16 H26 M13.500 22.400 H26"/></g></svg><svg class="abs" style="left:13px;top:105px" width="26" height="26" viewBox="0 0 26 26"><path d="M6.500 1 V24" stroke="#2e2e2e" stroke-width="2" stroke-dasharray="2.600 1.800"/><circle cx="6.500" cy="12" r="3.700" fill="#2e2e2e"/><path d="M18 12.500 V23 M12.800 17.800 H23.200" stroke="#1650b0" stroke-width="2.600"/></svg><svg class="abs" style="left:11px;top:149px" width="28" height="25" viewBox="0 0 28 25"><ellipse cx="13.800" cy="9.800" rx="12.200" ry="8.400" fill="#2e2e2e"/><path d="M6 15 C6 19 4.500 21 2 22.800 C7 22 10 20 12 17 Z" fill="#2e2e2e"/></svg><svg class="abs" style="left:12px;top:193px" width="26" height="25" viewBox="0 0 26 25"><g fill="none" stroke="#2e2e2e" stroke-width="2"><path d="M8.500 7.600 A8.300 8.300 0 1 1 6.500 18.500"/><path d="M11 1.500 H18 M14.500 1.500 V5 M20.500 4.500 L22.500 6.500" stroke-width="1.800"/><path d="M14.500 13.600 L18.200 9.400" stroke-width="1.800"/></g><g stroke="#2e2e2e" stroke-width="1.300"><path d="M2.500 10 H9 M0.800 13.200 H8 M2.500 16.400 H7.500"/></g></svg><div class="abs" style="left:0;top:226.500px;width:49px;height:1.500px;background:#ccc"></div><svg class="abs" style="left:13px;top:238px" width="23" height="25" viewBox="0 0 23 25"><rect x="1.800" y="1.800" width="19" height="21" rx="2.500" fill="none" stroke="#2e2e2e" stroke-width="1.900"/><g stroke="#2e2e2e" stroke-width="2.200"><path d="M10.800 7 h7 M10.800 12.400 h7 M10.800 17.800 h7"/></g><g fill="none" stroke="#2e2e2e" stroke-width="1.300"><path d="M4.600 7 l1.500 1.500 l2.800 -3.400 M4.600 12.400 l1.500 1.500 l2.800 -3.400 M4.600 17.800 l1.500 1.500 l2.800 -3.400"/></g></svg><svg class="abs" style="left:12px;top:1267px" width="26" height="22" viewBox="12 1267 26 22"><rect x="13.100" y="1269" width="22.800" height="9.800" rx="1.600" fill="#2e2e2e"/><circle cx="26.700" cy="1278.400" r="7.700" fill="#fafafa"/><circle cx="26.700" cy="1278.400" r="4.600" fill="none" stroke="#2a2a2a" stroke-width="2.300"/><path d="M30.200 1281.900 L34.300 1286" stroke="#2a2a2a" stroke-width="2.700" fill="none"/></svg></div>
<div id="panel"><svg class="abs" style="left:62px;top:115px" width="23" height="23" viewBox="0 0 23 23"><path d="M2 2.500 H20.500 L13.200 11.500 V20 L9.600 17 V11.500 Z" fill="none" stroke="#222" stroke-width="1.500" stroke-linejoin="round"/></svg><div class="abs" style="left:99px;top:106px;width:195px;height:35px;border:1px solid #aaa;border-radius:4px;background:#fff"></div><span class="t" style="left:107.40px;top:115.25px;font-size:17.4px;font-style:italic;letter-spacing:-0.647px;color:#8a8a8a;">Filter by name or type</span><span class="t" style="left:55.60px;top:153.50px;font-size:15.8px;font-weight:bold;letter-spacing:-0.029px;color:#222;">Features (17)</span><svg class="abs" style="left:219px;top:153px" width="26" height="21" viewBox="0 0 26 21"><path d="M1.800 8 V3 a1.300 1.300 0 0 1 1.300 -1.300 h5.500 l2.200 2.600 h11.400 a1.300 1.300 0 0 1 1.300 1.300 v12 a1.300 1.300 0 0 1 -1.300 1.300 H12.500 M3.800 18.900 H3 a1.300 1.300 0 0 1 -1.300 -1.300 V17" fill="none" stroke="#222" stroke-width="1.300"/><path d="M7.300 8.500 V18.500 M2.300 13.500 H12.300" stroke="#1650b0" stroke-width="2.500"/></svg><svg class="abs" style="left:257px;top:151px" width="23" height="25" viewBox="0 0 23 25"><circle cx="11.500" cy="14.500" r="8.600" fill="none" stroke="#222" stroke-width="2.100"/><path d="M8 1.600 H15 M11.500 1.600 V5.500 M18 5.800 L19.800 4" stroke="#222" stroke-width="1.900" fill="none"/><path d="M11 13.800 L15.200 17.800" stroke="#222" stroke-width="1.800"/></svg><div class="abs" style="left:279px;top:181px;width:21px;height:666px;background:#f1f1f1"></div><div class="abs" style="left:281px;top:202px;width:17px;height:584px;background:#c1c1c1"></div><svg class="abs" style="left:284px;top:189px" width="11" height="7" viewBox="0 0 11 7"><polygon points="5.500,0.800 10.200,6 0.800,6" fill="#a3a3a3"/></svg><svg class="abs" style="left:284px;top:832px" width="11" height="7" viewBox="0 0 11 7"><polygon points="5.500,6.200 10.200,1 0.800,1" fill="#505050"/></svg><div class="abs" style="left:50px;top:572.4px;width:229px;height:28.0px;background:#edf0f5;border-bottom:1.300px solid #9fd0f0"></div><div class="abs" style="left:50px;top:637px;width:229px;height:28.4px;background:#edf0f5;border-bottom:1.300px solid #9fd0f0"></div><div class="abs" style="left:50px;top:670.4px;width:229px;height:28.0px;background:#edf0f5;border-bottom:1.300px solid #9fd0f0"></div><div class="abs" style="left:61.3px;top:213px;width:1.500px;height:130px;background:#ccc"></div><div class="abs" style="left:56px;top:342px;width:12px;height:1.300px;background:#ccc"></div><div class="abs" style="left:61.3px;top:441px;width:1.500px;height:130px;background:#ccc"></div><div class="abs" style="left:56px;top:570px;width:12px;height:1.300px;background:#ccc"></div><div class="abs" style="left:61.3px;top:603px;width:1.500px;height:97px;background:#ccc"></div><div class="abs" style="left:56px;top:699px;width:12px;height:1.300px;background:#ccc"></div><div class="abs" style="left:61.3px;top:766px;width:1.500px;height:82px;background:#ccc"></div><svg class="abs" style="left:55px;top:192.5px" width="16" height="11" viewBox="0 0 16 11"><path d="M1.600 1.800 L8 8.300 L14.400 1.800" fill="none" stroke="#555" stroke-width="2.900" stroke-linecap="round"/></svg><span class="t" style="left:79.60px;top:188.34px;font-size:16.2px;letter-spacing:0.209px;">Default geometry</span><svg class="abs" style="left:84px;top:222.2px" width="14" height="14" viewBox="0 0 14 14"><circle cx="7" cy="7" r="4.300" fill="#fff" stroke="#555" stroke-width="1.200"/><circle cx="7" cy="7" r="1.700" fill="#333"/></svg><span class="t" style="left:106.80px;top:220.34px;font-size:16.2px;letter-spacing:-0.078px;">Origin</span><svg class="abs" style="left:81px;top:252.2px" width="20" height="20" viewBox="0 0 24 24"><polygon points="1.500,2.500 22,5.500 22,22 1.500,19" fill="#ddd" stroke="#444" stroke-width="1.500" stroke-linejoin="round"/><path d="M12 4 V12.800 L22 14.200" fill="none" stroke="#444" stroke-width="1.500"/></svg><span class="t" style="left:107.00px;top:253.34px;font-size:16.2px;letter-spacing:0.545px;">Top</span><svg class="abs" style="left:81px;top:284.2px" width="20" height="20" viewBox="0 0 24 24"><polygon points="1.500,2.500 22,5.500 22,22 1.500,19" fill="#ddd" stroke="#444" stroke-width="1.500" stroke-linejoin="round"/><path d="M12 4 V12.800 L22 14.200" fill="none" stroke="#444" stroke-width="1.500"/></svg><span class="t" style="left:107.00px;top:285.34px;font-size:16.2px;letter-spacing:0.301px;">Front</span><svg class="abs" style="left:81px;top:317.2px" width="20" height="20" viewBox="0 0 24 24"><polygon points="1.500,2.500 22,5.500 22,22 1.500,19" fill="#ddd" stroke="#444" stroke-width="1.500" stroke-linejoin="round"/><path d="M12 4 V12.800 L22 14.200" fill="none" stroke="#444" stroke-width="1.500"/></svg><span class="t" style="left:107.00px;top:318.34px;font-size:16.2px;letter-spacing:-0.049px;">Right</span><svg class="abs" style="left:57.3px;top:351.2px" width="11" height="16" viewBox="0 0 11 16"><path d="M1.800 1.600 L8.300 8 L1.800 14.400" fill="none" stroke="#555" stroke-width="2.900" stroke-linecap="round"/></svg><svg class="abs" style="left:81.8px;top:349.2px" width="20" height="20" viewBox="0 0 24 24"><g stroke="#aaa" stroke-width="1.500" stroke-linejoin="round"><polygon points="12,1.500 22,6.500 22,17.500 12,22.500 2,17.500 2,6.500" fill="#f2f2f2"/><path d="M2 6.500 L12 11.500 L22 6.500 M12 11.500 V22.500" fill="none"/></g></svg><span class="t" style="left:108.00px;top:350.34px;font-size:16.2px;letter-spacing:-0.189px;color:#aaa;">Origin Cube</span><svg class="abs" style="left:225.6px;top:346.2px" width="8" height="26" viewBox="0 0 8 26"><path d="M4 1 V25" stroke="#222" stroke-width="1.800" stroke-dasharray="2.400 1.800"/><circle cx="4" cy="13" r="3.400" fill="#222"/></svg><svg class="abs" style="left:56.5px;top:381.2px" width="20" height="20" viewBox="0 0 24 24"><path d="M0.500 22.500 H23.500" stroke="#3f6fd0" stroke-width="1.600"/><g fill="none" stroke="#222" stroke-width="1.250" stroke-linejoin="round"><path d="M18 1.400 L22.400 5.400 L8 19.400 L2.600 21 L4.200 15.600 Z"/><path d="M4.200 15.600 L8 19.400 M15.600 3.800 L20 7.800"/></g></svg><span class="t" style="left:83.10px;top:383.34px;font-size:16.2px;letter-spacing:0.076px;">Layout Sketch</span><svg class="abs" style="left:55px;top:419.2px" width="16" height="11" viewBox="0 0 16 11"><path d="M1.600 1.800 L8 8.300 L14.400 1.800" fill="none" stroke="#555" stroke-width="2.900" stroke-linecap="round"/></svg><svg class="abs" style="left:81.3px;top:415.2px" width="20" height="19" viewBox="0 0 24 24"><path d="M1.200 4 a1.500 1.500 0 0 1 1.500 -1.500 h6 l2.500 2.800 h10.500 a1.500 1.500 0 0 1 1.500 1.500 v12.500 a1.500 1.500 0 0 1 -1.500 1.500 h-19 a1.500 1.500 0 0 1 -1.500 -1.500 z" fill="#fff" stroke="#555" stroke-width="1.400"/></svg><span class="t" style="left:108.00px;top:415.34px;font-size:16.2px;letter-spacing:0.047px;">Plates (4)</span><svg class="abs" style="left:81px;top:446.7px" width="20" height="20" viewBox="0 0 24 24"><path d="M0.500 22.500 H23.500" stroke="#8fb0ea" stroke-width="1.600"/><g fill="none" stroke="#aaa" stroke-width="1.250" stroke-linejoin="round"><path d="M18 1.400 L22.400 5.400 L8 19.400 L2.600 21 L4.200 15.600 Z"/><path d="M4.200 15.600 L8 19.400 M15.600 3.800 L20 7.800"/></g></svg><span class="t" style="left:106.70px;top:448.34px;font-size:16.2px;letter-spacing:0.092px;color:#aaa;">Plate Sketch</span><svg class="abs" style="left:80.5px;top:479.2px" width="20" height="20" viewBox="0 0 24 24"><g stroke="#444" stroke-width="1.2" fill="#fff" stroke-linejoin="round"><polygon points="0.8,0.8 19.5,0.8 22.6,3.8 22.6,22.6 3.8,22.6 0.8,19.6"/><path d="M0.8 0.800L3.800 3.800H22.600M3.800 3.800V22.600" fill="none" stroke-width="1"/>
<polygon points="8,8.600 19.800,8.600 22.400,11.200 22.400,22.400 10.600,22.400 8,19.800" fill="#999" stroke-width="1"/><path d="M8 8.600L10.600 11.200H22.400M10.600 11.200V22.400" fill="none" stroke-width=".9"/></g></svg><span class="t" style="left:107.00px;top:480.34px;font-size:16.2px;letter-spacing:0.084px;">Plate Extrude</span><svg class="abs" style="left:81px;top:511.70000000000005px" width="20" height="20" viewBox="0 0 24 24"><path d="M0.500 22.500 H23.500" stroke="#8fb0ea" stroke-width="1.600"/><g fill="none" stroke="#aaa" stroke-width="1.250" stroke-linejoin="round"><path d="M18 1.400 L22.400 5.400 L8 19.400 L2.600 21 L4.200 15.600 Z"/><path d="M4.200 15.600 L8 19.400 M15.600 3.800 L20 7.800"/></g></svg><span class="t" style="left:106.70px;top:513.34px;font-size:16.2px;letter-spacing:0.092px;color:#aaa;">Top Plate Sketch w...</span><svg class="abs" style="left:80.5px;top:544.2px" width="20" height="20" viewBox="0 0 24 24"><g stroke="#444" stroke-width="1.2" fill="#fff" stroke-linejoin="round"><polygon points="0.8,0.8 19.5,0.8 22.6,3.8 22.6,22.6 3.8,22.6 0.8,19.6"/><path d="M0.8 0.800L3.800 3.800H22.600M3.800 3.800V22.600" fill="none" stroke-width="1"/>
<polygon points="8,8.600 19.800,8.600 22.400,11.200 22.400,22.400 10.600,22.400 8,19.800" fill="#999" stroke-width="1"/><path d="M8 8.600L10.600 11.200H22.400M10.600 11.200V22.400" fill="none" stroke-width=".9"/></g></svg><span class="t" style="left:107.00px;top:545.34px;font-size:16.2px;letter-spacing:0.139px;">Top Plate Extrude</span><svg class="abs" style="left:55px;top:582.2px" width="16" height="11" viewBox="0 0 16 11"><path d="M1.600 1.800 L8 8.300 L14.400 1.800" fill="none" stroke="#555" stroke-width="2.900" stroke-linecap="round"/></svg><svg class="abs" style="left:81.3px;top:578.2px" width="20" height="19" viewBox="0 0 24 24"><path d="M1.200 4 a1.500 1.500 0 0 1 1.500 -1.500 h6 l2.500 2.800 h10.500 a1.500 1.500 0 0 1 1.500 1.500 v12.500 a1.500 1.500 0 0 1 -1.500 1.500 h-19 a1.500 1.500 0 0 1 -1.500 -1.500 z" fill="#fff" stroke="#555" stroke-width="1.400"/></svg><span class="t" style="left:108.00px;top:578.34px;font-size:16.2px;letter-spacing:-0.121px;">Tubes (3)</span><svg class="abs" style="left:81px;top:608.7px" width="20" height="20" viewBox="0 0 24 24"><path d="M0.500 22.500 H23.500" stroke="#8fb0ea" stroke-width="1.600"/><g fill="none" stroke="#aaa" stroke-width="1.250" stroke-linejoin="round"><path d="M18 1.400 L22.400 5.400 L8 19.400 L2.600 21 L4.200 15.600 Z"/><path d="M4.200 15.600 L8 19.400 M15.600 3.800 L20 7.800"/></g></svg><span class="t" style="left:106.70px;top:610.34px;font-size:16.2px;color:#aaa;">Tube Sketch</span><svg class="abs" style="left:80.5px;top:642.2px" width="20" height="20" viewBox="0 0 24 24"><g stroke="#444" stroke-width="1.2" fill="#fff" stroke-linejoin="round"><polygon points="0.8,0.8 19.5,0.8 22.6,3.8 22.6,22.6 3.8,22.6 0.8,19.6"/><path d="M0.8 0.800L3.800 3.800H22.600M3.800 3.800V22.600" fill="none" stroke-width="1"/>
<polygon points="8,8.600 19.800,8.600 22.400,11.200 22.400,22.400 10.600,22.400 8,19.800" fill="#999" stroke-width="1"/><path d="M8 8.600L10.600 11.200H22.400M10.600 11.200V22.400" fill="none" stroke-width=".9"/></g></svg><span class="t" style="left:107.00px;top:643.34px;font-size:16.2px;letter-spacing:0.055px;">Tube Extrude</span><svg class="abs" style="left:80px;top:673.7px" width="21" height="21" viewBox="0 0 24 24"><g stroke="#222" stroke-width="1.300" stroke-linejoin="round"><polygon points="1,3.500 5,1 15.500,3 23,6.500 23,21.500 15,23 1,19" fill="#fff"/><polygon points="15,7 23,6.500 23,21.500 15,23" fill="#666"/><polygon points="16.800,10 21.300,9 21.300,19 16.800,20.500" fill="#bbb" stroke-width=".8"/><path d="M1 3.500 L15 7 M5 1 L15.500 3" fill="none"/></g><g fill="#fff" stroke="#222" stroke-width="1.300"><circle cx="5" cy="8.500" r="1.700"/><circle cx="10.500" cy="10" r="1.700"/><circle cx="5" cy="15" r="1.700"/><circle cx="10.500" cy="16.800" r="1.700"/></g></svg><span class="t" style="left:107.00px;top:675.34px;font-size:16.2px;letter-spacing:-0.168px;">1x1 Convert</span><svg class="abs" style="left:225.6px;top:671.2px" width="8" height="26" viewBox="0 0 8 26"><path d="M4 1 V25" stroke="#222" stroke-width="1.800" stroke-dasharray="2.400 1.800"/><circle cx="4" cy="13" r="3.400" fill="#222"/></svg><div class="abs" style="left:56px;top:713.300px;width:216.600px;height:7.400px;background:#b3b3b3"></div><svg class="abs" style="left:55px;top:744.2px" width="16" height="11" viewBox="0 0 16 11"><path d="M1.600 1.800 L8 8.300 L14.400 1.800" fill="none" stroke="#4a4a4a" stroke-width="2.900" stroke-linecap="round"/></svg><svg class="abs" style="left:81.3px;top:740.2px" width="20" height="19" viewBox="0 0 24 24"><path d="M1.200 4 a1.500 1.500 0 0 1 1.500 -1.500 h6 l2.500 2.800 h10.500 a1.500 1.500 0 0 1 1.500 1.500 v12.500 a1.500 1.500 0 0 1 -1.500 1.500 h-19 a1.500 1.500 0 0 1 -1.500 -1.500 z" fill="#fff" stroke="#aaa" stroke-width="1.400"/></svg><span class="t" style="left:108.70px;top:740.34px;font-size:16.2px;font-style:italic;letter-spacing:0.065px;color:#aaa;">Belts (3)</span><div class="abs" style="left:50px;top:760px;width:229px;height:87.500px;overflow:hidden"><svg class="abs" style="left:30px;top:11.200000000000045px" width="21" height="21" viewBox="0 0 24 24"><g stroke="#aaa" stroke-width="1.300" fill="#ddd"><path d="M7.500 4.500 A5 5 0 0 1 17 4.500 L23 15 A5 5 0 0 1 19.500 22 L6 23.500 A5 5 0 0 1 1.500 16 Z" fill="#ccc"/><circle cx="12.200" cy="6.500" r="4" fill="#ddd"/><circle cx="6" cy="18.500" r="4.200"/><circle cx="19" cy="16.500" r="3.200" fill="#fff"/><path d="M11 11 L8 14.500 M14 10.500 L17 13.500 M10 19.500 L16 18.500" fill="none"/></g></svg><svg class="abs" style="left:175.6px;top:9.200000000000045px" width="8" height="26" viewBox="0 0 8 26"><path d="M4 1 V25" stroke="#222" stroke-width="1.800" stroke-dasharray="2.400 1.800"/><circle cx="4" cy="13" r="3.400" fill="#222"/></svg><svg class="abs" style="left:30px;top:43.200000000000045px" width="21" height="21" viewBox="0 0 24 24"><g stroke="#aaa" stroke-width="1.300" fill="#ddd"><path d="M7.500 4.500 A5 5 0 0 1 17 4.500 L23 15 A5 5 0 0 1 19.500 22 L6 23.500 A5 5 0 0 1 1.500 16 Z" fill="#ccc"/><circle cx="12.200" cy="6.500" r="4" fill="#ddd"/><circle cx="6" cy="18.500" r="4.200"/><circle cx="19" cy="16.500" r="3.200" fill="#fff"/><path d="M11 11 L8 14.500 M14 10.500 L17 13.500 M10 19.500 L16 18.500" fill="none"/></g></svg><svg class="abs" style="left:175.6px;top:41.200000000000045px" width="8" height="26" viewBox="0 0 8 26"><path d="M4 1 V25" stroke="#222" stroke-width="1.800" stroke-dasharray="2.400 1.800"/><circle cx="4" cy="13" r="3.400" fill="#222"/></svg><svg class="abs" style="left:30px;top:76.20000000000005px" width="21" height="21" viewBox="0 0 24 24"><g stroke="#aaa" stroke-width="1.300" fill="#ddd"><path d="M7.500 4.500 A5 5 0 0 1 17 4.500 L23 15 A5 5 0 0 1 19.500 22 L6 23.500 A5 5 0 0 1 1.500 16 Z" fill="#ccc"/><circle cx="12.200" cy="6.500" r="4" fill="#ddd"/><circle cx="6" cy="18.500" r="4.200"/><circle cx="19" cy="16.500" r="3.200" fill="#fff"/><path d="M11 11 L8 14.500 M14 10.500 L17 13.500 M10 19.500 L16 18.500" fill="none"/></g></svg><svg class="abs" style="left:175.6px;top:74.20000000000005px" width="8" height="26" viewBox="0 0 8 26"><path d="M4 1 V25" stroke="#222" stroke-width="1.800" stroke-dasharray="2.400 1.800"/><circle cx="4" cy="13" r="3.400" fill="#222"/></svg></div><span class="t" style="left:108.70px;top:773.34px;font-size:16.2px;font-style:italic;color:#aaa;">?</span><span class="t" style="left:108.70px;top:805.34px;font-size:16.2px;font-style:italic;color:#aaa;">?</span><div class="abs" style="left:100px;top:835px;width:30px;height:12.500px;overflow:hidden"><span class="t" style="left:8.70px;top:3.34px;font-size:16.2px;font-style:italic;color:#aaa;">?</span></div><div class="abs" style="left:50px;top:847.500px;width:250px;height:1.600px;background:#ccc"></div><div class="abs" style="left:50px;top:981.300px;width:250px;height:29.400px;background:#b3ddf5"></div><svg class="abs" style="left:55px;top:860.5px" width="16" height="11" viewBox="0 0 16 11"><path d="M1.600 1.800 L8 8.300 L14.400 1.800" fill="none" stroke="#555" stroke-width="2.900" stroke-linecap="round"/></svg><span class="t" style="left:79.00px;top:856.64px;font-size:16.2px;letter-spacing:0.078px;">Parts (4)</span><svg class="abs" style="left:80.5px;top:888.0px" width="20" height="20" viewBox="0 0 24 24"><g stroke="#444" stroke-width="1.400" stroke-linejoin="round" fill="#fff"><polygon points="12,1.500 18.500,1.500 22.500,5 22.500,22 6,22 1.500,18 1.500,11.500 12,11.500"/><path d="M12 1.500 L16 5 H22.500 M16 5 V15 H6 V22 M6 15 L1.500 11.500" fill="none" stroke-width="1.200"/></g></svg><span class="t" style="left:106.80px;top:888.64px;font-size:16.2px;letter-spacing:-0.199px;">Origin Cube</span><svg class="abs" style="left:80.5px;top:921.0px" width="20" height="20" viewBox="0 0 24 24"><g stroke="#444" stroke-width="1.400" stroke-linejoin="round" fill="#fff"><polygon points="12,1.500 18.500,1.500 22.500,5 22.500,22 6,22 1.500,18 1.500,11.500 12,11.500"/><path d="M12 1.500 L16 5 H22.500 M16 5 V15 H6 V22 M6 15 L1.500 11.500" fill="none" stroke-width="1.200"/></g></svg><span class="t" style="left:106.80px;top:921.64px;font-size:16.2px;letter-spacing:0.283px;">Bottom Plate</span><svg class="abs" style="left:80.5px;top:953.0px" width="20" height="20" viewBox="0 0 24 24"><g stroke="#444" stroke-width="1.400" stroke-linejoin="round" fill="#fff"><polygon points="12,1.500 18.500,1.500 22.500,5 22.500,22 6,22 1.500,18 1.500,11.500 12,11.500"/><path d="M12 1.500 L16 5 H22.500 M16 5 V15 H6 V22 M6 15 L1.500 11.500" fill="none" stroke-width="1.200"/></g></svg><span class="t" style="left:106.80px;top:953.64px;font-size:16.2px;letter-spacing:0.188px;">Top Plate</span><svg class="abs" style="left:80.5px;top:986.0px" width="20" height="20" viewBox="0 0 24 24"><g stroke="#444" stroke-width="1.400" stroke-linejoin="round" fill="#fff"><polygon points="12,1.500 18.500,1.500 22.500,5 22.500,22 6,22 1.500,18 1.500,11.500 12,11.500"/><path d="M12 1.500 L16 5 H22.500 M16 5 V15 H6 V22 M6 15 L1.500 11.500" fill="none" stroke-width="1.200"/></g></svg><span class="t" style="left:106.80px;top:986.64px;font-size:16.2px;letter-spacing:0.080px;">Tube 1"x1"x5"</span></div>
<div id="tabs"><div class="abs" style="left:50px;top:1257px;width:43px;height:35px;background:#d9d9d9"></div><svg class="abs" style="left:60px;top:1265px" width="21" height="21" viewBox="0 0 21 21"><path d="M10.400 0.800 V19.800 M0.800 10.300 H20" stroke="#636363" stroke-width="3.400" fill="none"/></svg><svg class="abs" style="left:93px;top:1257px" width="216" height="34" viewBox="0 0 216 34"><path d="M0 0 H42.500 L52.500 16.500 L42.500 33 H3 a3 3 0 0 1 -3 -3 Z" fill="#e9e9e9"/><path d="M42.500 0 H203 L213 16.500 L203 33 H42.500 L52.500 16.500 Z" fill="#fff"/>
<path d="M22.500 3.500 L34.500 15.200 H31.400 V25.600 H25.400 V18.200 H19.600 V25.600 H13.600 V15.200 H10.500 Z M28.500 4 H31.400 V9.500 L28.500 6.800 Z" fill="#666"/></svg><span class="t" style="left:162.60px;top:1262.86px;font-size:16.4px;letter-spacing:0.168px;color:#666;">Exercise 7 - Ver</span><div class="abs" style="left:308.500px;top:1257px;width:251px;height:33px;background:#ebebeb;border-radius:0 0 5px 5px"></div><svg class="abs" style="left:321px;top:1260px" width="25" height="25" viewBox="0 0 25 25"><g stroke="#444" stroke-width="1.200" stroke-linejoin="round"><polygon points="1.500,5 5,1.500 19.500,1.500 23.500,5.500 23.500,23.500 5.500,23.500 1.500,19.500" fill="#fff"/><polygon points="1.500,5 5,1.500 14,1.500 17,4.500 17,16.500 5.500,16.500 1.500,13" fill="#999"/><path d="M1.500 5 L5.500 7.500 H17 M5.500 7.500 V23.500 M17 4.500 H23" fill="none" stroke-width="1"/></g></svg><span class="t" style="left:350.20px;top:1264.60px;font-size:16.8px;letter-spacing:0.276px;color:#666;">Exercise 7 Assembly</span><div class="abs" style="left:561.500px;top:1257px;width:249.500px;height:34px;background:#fff;border-bottom:3px solid #1650b0;border-radius:0 0 4px 4px;box-sizing:border-box"></div><svg class="abs" style="left:575px;top:1259px" width="25" height="27" viewBox="0 0 25 27"><g stroke="#444" stroke-width="1.300" stroke-linejoin="round" fill="#fff"><path d="M1.500 11 L4.500 8.500 H10.500 V25.500 H4 L1.500 23 Z"/><path d="M1.500 11 L4 12.500 V25.500 M4 12.500 L7 12.500" fill="none" stroke-width="1"/><path d="M10.500 5 L13.500 2 H20 L22.500 4.500 V25.500 H13 L10.500 23 Z"/><path d="M10.500 5 L13 6.500 V25.500 M13 6.500 H22.500" fill="none" stroke-width="1"/></g></svg><span class="t" style="left:603.20px;top:1264.60px;font-size:16.8px;letter-spacing:0.113px;">Exercise 7 Part Studio</span></div>
<svg class="abs" id="scene" style="left:0;top:0" width="2398" height="1294" viewBox="0 0 2398 1294"><defs>
<path id="tp" d="M992 292 L1192.500 272.500 Q1208 270 1208 259 C1203.500 246 1205 234 1210 227.500 C1220 210 1245 201.200 1272.500 201.200 Q1287 201.200 1297.500 204.200 L1491.200 246.200 L1527.500 267.500 L1427 330.500 Q1418 335.500 1407.500 335.700 L1200 349 Q1192 349.200 1187 347.500 L990 308.300 Q980.500 305 981.500 299.500 Q983 293 992 292 Z"/>
<path id="bp" d="M992 546.700 L1491 500.800 L1528.500 522.500 L1424.500 586 Q1416 590.300 1408 590.300 L1200 603.500 Q1192 603.800 1187.500 602.200 L988.500 562.800 Q979.500 559.500 980.500 553.500 Q983 547.500 992 546.700 Z"/>
<clipPath id="tpc"><use href="#tp"/></clipPath>
<clipPath id="tpc2"><use href="#tp" transform="translate(0 11.500)"/></clipPath>
<clipPath id="bpc"><use href="#bp"/></clipPath>
<clipPath id="bpc2"><use href="#bp" transform="translate(0 12)"/></clipPath>
<linearGradient id="cubeg" x1="0" y1="0" x2="1" y2="1"><stop offset="0" stop-color="#b9bcbf"/><stop offset="1" stop-color="#abaeb1"/></linearGradient>
</defs><g id="sk" fill="none" stroke="#b2b2b2" stroke-width="1.600" stroke-dasharray="30 7 4 7"><ellipse cx="1274" cy="506" rx="71" ry="39.500"/><ellipse cx="1276" cy="509" rx="23" ry="12.500"/><ellipse cx="993" cy="566" rx="57.500" ry="35"/><ellipse cx="993" cy="566" rx="42" ry="26"/><ellipse cx="1199" cy="598" rx="60" ry="35"/><ellipse cx="1199" cy="598" rx="46" ry="26"/><ellipse cx="1405" cy="585" rx="60" ry="34"/><ellipse cx="1405" cy="585" rx="46" ry="26"/><path d="M1013 596.500 L1175 622 M1215 628 L1395 614"/></g><g fill="#b4b4b4"><circle cx="984" cy="591" r="2.300"/><circle cx="1185" cy="625" r="2.300"/><circle cx="1203" cy="625" r="2.300"/><circle cx="1412" cy="610" r="2.300"/><circle cx="1370" cy="601" r="2.300"/><circle cx="1008" cy="541" r="2.300"/><circle cx="1274" cy="509" r="2.800"/><circle cx="1290" cy="499" r="2.300"/><circle cx="1257" cy="517" r="2.300"/></g><g id="bplate"><g fill="#3f4246"><use href="#bp"/><use href="#bp" transform="translate(0 12)"/><use href="#bp" transform="translate(0 1)"/><use href="#bp" transform="translate(0 2)"/><use href="#bp" transform="translate(0 3)"/><use href="#bp" transform="translate(0 4)"/><use href="#bp" transform="translate(0 5)"/><use href="#bp" transform="translate(0 6)"/><use href="#bp" transform="translate(0 7)"/><use href="#bp" transform="translate(0 8)"/><use href="#bp" transform="translate(0 9)"/><use href="#bp" transform="translate(0 10)"/><use href="#bp" transform="translate(0 11)"/></g><g clip-path="url(#bpc)"><use href="#bp" transform="translate(0 12)" fill="#4f5458"/></g><g clip-path="url(#bpc)"><g fill="none" stroke="#8d9194" stroke-width="1.500" stroke-dasharray="30 7 4 7"><ellipse cx="1274" cy="506" rx="71" ry="39.500"/><ellipse cx="993" cy="566" rx="57.500" ry="35"/><ellipse cx="993" cy="566" rx="42" ry="26"/><ellipse cx="1199" cy="598" rx="60" ry="35"/><ellipse cx="1199" cy="598" rx="46" ry="26"/><ellipse cx="1405" cy="585" rx="60" ry="34"/><ellipse cx="1405" cy="585" rx="46" ry="26"/><path d="M1040 552 L1200 572 L1440 556 M1215 528 L1330 585 M1300 520 L1400 570 M1390 520 L1480 565 M1200 572 L1120 545 M1330 585 L1370 560 L1420 565"/></g></g><g fill="none" stroke="#1b1c1e" stroke-width="1.600"><use href="#bp"/><use href="#bp" transform="translate(0 12)"/><path d="M1489.800 548 V558.500 M1528.500 523 V535 M1197.500 603.500 V615.500 M1189 602.500 V614.500 M1408.500 590.300 V602.300 M1424.500 586 V598 M992 546.700 V558.700 M981 553 V565"/></g><rect x="989.9" y="554.5" width="11.200" height="12.500" fill="#3e4145" stroke="none"/><path d="M989.9 554.5 V567.0 M1001.1 554.5 V567.0" stroke="#1b1c1e" stroke-width="1.100"/><ellipse cx="995.5" cy="554.5" rx="5.600" ry="3.600" fill="#45484c" stroke="#1b1c1e" stroke-width="1.300"/><ellipse cx="995.5" cy="567.0" rx="5.600" ry="3.600" fill="#3e4145" stroke="#1b1c1e" stroke-width="1.300"/><circle cx="995.5" cy="567.0" r="2.600" fill="#c9c9c9"/><rect x="1191.9" y="588" width="11.200" height="12.500" fill="#3e4145" stroke="none"/><path d="M1191.9 588 V600.5 M1203.1 588 V600.5" stroke="#1b1c1e" stroke-width="1.100"/><ellipse cx="1197.5" cy="588" rx="5.600" ry="3.600" fill="#45484c" stroke="#1b1c1e" stroke-width="1.300"/><ellipse cx="1197.5" cy="600.5" rx="5.600" ry="3.600" fill="#3e4145" stroke="#1b1c1e" stroke-width="1.300"/><circle cx="1197.5" cy="600.5" r="2.600" fill="#c9c9c9"/><rect x="1399.9" y="572.5" width="11.200" height="12.500" fill="#3e4145" stroke="none"/><path d="M1399.9 572.5 V585.0 M1411.1 572.5 V585.0" stroke="#1b1c1e" stroke-width="1.100"/><ellipse cx="1405.5" cy="572.5" rx="5.600" ry="3.600" fill="#45484c" stroke="#1b1c1e" stroke-width="1.300"/><ellipse cx="1405.5" cy="585.0" rx="5.600" ry="3.600" fill="#3e4145" stroke="#1b1c1e" stroke-width="1.300"/><circle cx="1405.5" cy="585.0" r="2.600" fill="#c9c9c9"/></g><g id="tplate"><g fill="#3c3f44"><use href="#tp"/><use href="#tp" transform="translate(0 11.500)"/><use href="#tp" transform="translate(0 1)"/><use href="#tp" transform="translate(0 2)"/><use href="#tp" transform="translate(0 3)"/><use href="#tp" transform="translate(0 4)"/><use href="#tp" transform="translate(0 5)"/><use href="#tp" transform="translate(0 6)"/><use href="#tp" transform="translate(0 7)"/><use href="#tp" transform="translate(0 8)"/><use href="#tp" transform="translate(0 9)"/><use href="#tp" transform="translate(0 10)"/><use href="#tp" transform="translate(0 11)"/></g><g clip-path="url(#tpc)"><use href="#tp" transform="translate(0 11.500)" fill="#45484d"/></g><g fill="none" stroke="#1b1c1e" stroke-width="1.600"><use href="#tp"/><use href="#tp" transform="translate(0 11.500)"/><path d="M1297.500 204.200 V215.700 M1491.200 246.200 V257.700 M1527.500 267.500 V279 M1427 330.500 V342 M1407.500 335.700 V347.200 M1200 349 V360.500 M1187 347.500 V359 M990 308.300 V319.800 M981.300 299.500 V311 M1192.500 272.500 V284 M1208 259 V270.500"/></g><ellipse cx="1274.700" cy="242.200" rx="30.100" ry="17" fill="#3c3f44" stroke="#1b1c1e" stroke-width="1.300"/><ellipse cx="1274.700" cy="254.200" rx="30.100" ry="17" fill="#3c3f44" stroke="#1b1c1e" stroke-width="1.300"/><rect x="1244.600" y="242.200" width="60.200" height="12" fill="#3c3f44"/><clipPath id="bh1"><ellipse cx="1274.700" cy="242.200" rx="29.500" ry="16.400"/></clipPath><g clip-path="url(#bh1)"><ellipse cx="1274.700" cy="254.200" rx="29.500" ry="16.400" fill="#fff"/></g><g fill="none" stroke="#1b1c1e" stroke-width="1.300"><ellipse cx="1274.700" cy="242.200" rx="30.100" ry="17"/><ellipse cx="1274.700" cy="254.200" rx="30.100" ry="17"/><path d="M1244.600 242.200 V254.200 M1304.800 242.200 V254.200"/></g><rect x="1226.4" y="217.8" width="12.200" height="12" fill="#3c3f44"/><ellipse cx="1232.5" cy="217.8" rx="6.100" ry="3.800" fill="#404348" stroke="#1b1c1e" stroke-width="1.300"/><ellipse cx="1232.5" cy="229.8" rx="6.100" ry="3.800" fill="#404348" stroke="#1b1c1e" stroke-width="1.300"/><rect x="1310.7" y="217.8" width="12.200" height="12" fill="#3c3f44"/><ellipse cx="1316.8" cy="217.8" rx="6.100" ry="3.800" fill="#404348" stroke="#1b1c1e" stroke-width="1.300"/><ellipse cx="1316.8" cy="229.8" rx="6.100" ry="3.800" fill="#404348" stroke="#1b1c1e" stroke-width="1.300"/><rect x="1226.4" y="266.5" width="12.200" height="12" fill="#3c3f44"/><ellipse cx="1232.5" cy="266.5" rx="6.100" ry="3.800" fill="#404348" stroke="#1b1c1e" stroke-width="1.300"/><ellipse cx="1232.5" cy="278.5" rx="6.100" ry="3.800" fill="#404348" stroke="#1b1c1e" stroke-width="1.300"/><rect x="988.9" y="299.5" width="12.200" height="12" fill="#3c3f44"/><ellipse cx="995" cy="299.5" rx="6.100" ry="3.800" fill="#404348" stroke="#1b1c1e" stroke-width="1.300"/><ellipse cx="995" cy="311.5" rx="6.100" ry="3.800" fill="#404348" stroke="#1b1c1e" stroke-width="1.300"/><rect x="1190.9" y="332.5" width="12.200" height="12" fill="#3c3f44"/><ellipse cx="1197" cy="332.5" rx="6.100" ry="3.800" fill="#404348" stroke="#1b1c1e" stroke-width="1.300"/><ellipse cx="1197" cy="344.5" rx="6.100" ry="3.800" fill="#404348" stroke="#1b1c1e" stroke-width="1.300"/><rect x="1398.9" y="317.5" width="12.200" height="12" fill="#3c3f44"/><ellipse cx="1405" cy="317.5" rx="6.100" ry="3.800" fill="#404348" stroke="#1b1c1e" stroke-width="1.300"/><ellipse cx="1405" cy="329.5" rx="6.100" ry="3.800" fill="#404348" stroke="#1b1c1e" stroke-width="1.300"/></g><g id="tube"><polygon points="1447.900,280.100 1489.600,305 1489.600,548.600 1447.900,525" fill="#c4953a"/><polygon points="1531.300,280.100 1489.600,305 1489.600,548.600 1531.300,525" fill="#dfab45"/><polygon points="1447.900,280.100 1489.600,256.400 1531.300,280.100 1489.600,305" fill="#a18341"/><polygon points="1447.900,280.100 1489.600,305 1447.900,328" fill="#a18341"/><path d="M1447.900 316.400 L1478.400 299.400 M1447.900 328 L1489.600 305" stroke="#8e7337" stroke-width="1" fill="none"/><path d="M1489.600 305 V548.600" stroke="#b08733" stroke-width="1.300"/><path d="M1447.900 280.100 L1489.600 305 L1531.300 280.100 M1489.600 256.400 V305 M1469 268.500 L1510.500 292.800 M1510.500 268.500 L1469 292.800" stroke="#8e7337" stroke-width="1" fill="none" opacity=".7"/><g fill="none" stroke="#8a6f33" stroke-width="1.200"><ellipse cx="1489" cy="272.200" rx="5.300" ry="3.600"/><ellipse cx="1489" cy="278.400" rx="5.300" ry="3.600"/><ellipse cx="1489" cy="290" rx="5.300" ry="3.600"/><ellipse cx="1473.700" cy="281.600" rx="5.300" ry="3.600"/><ellipse cx="1505.600" cy="281.600" rx="5.300" ry="3.600"/><path d="M1470 271.500 A5.300 3.600 0 0 0 1480 270 M1499 270 A5.300 3.600 0 0 0 1509 271.500"/></g><ellipse cx="1468.600" cy="317.6" rx="4.200" ry="5.200" fill="#ad7f2e"/><rect x="1468.300" y="315.0" width="4.600" height="6.400" rx="1" fill="#fdbc45"/><ellipse cx="1511" cy="317.3" rx="4.200" ry="5.200" fill="#bd8c33"/><ellipse cx="1508.800" cy="317.8" rx="3" ry="3.700" fill="#fdbc45"/><ellipse cx="1468.600" cy="341.9" rx="4.200" ry="5.200" fill="#ad7f2e"/><rect x="1468.300" y="339.2" width="4.600" height="6.400" rx="1" fill="#fdbc45"/><ellipse cx="1511" cy="341.6" rx="4.200" ry="5.200" fill="#bd8c33"/><ellipse cx="1508.800" cy="342.1" rx="3" ry="3.700" fill="#fdbc45"/><ellipse cx="1468.600" cy="366.1" rx="4.200" ry="5.200" fill="#ad7f2e"/><rect x="1468.300" y="363.5" width="4.600" height="6.400" rx="1" fill="#fdbc45"/><ellipse cx="1511" cy="365.8" rx="4.200" ry="5.200" fill="#bd8c33"/><ellipse cx="1508.800" cy="366.3" rx="3" ry="3.700" fill="#fdbc45"/><ellipse cx="1468.600" cy="390.4" rx="4.200" ry="5.200" fill="#ad7f2e"/><rect x="1468.300" y="387.8" width="4.600" height="6.400" rx="1" fill="#fdbc45"/><ellipse cx="1511" cy="390.1" rx="4.200" ry="5.200" fill="#bd8c33"/><ellipse cx="1508.800" cy="390.6" rx="3" ry="3.700" fill="#fdbc45"/><ellipse cx="1468.600" cy="414.6" rx="4.200" ry="5.200" fill="#ad7f2e"/><rect x="1468.300" y="412.0" width="4.600" height="6.400" rx="1" fill="#fdbc45"/><ellipse cx="1511" cy="414.3" rx="4.200" ry="5.200" fill="#bd8c33"/><ellipse cx="1508.800" cy="414.8" rx="3" ry="3.700" fill="#fdbc45"/><ellipse cx="1468.600" cy="438.9" rx="4.200" ry="5.200" fill="#ad7f2e"/><rect x="1468.300" y="436.2" width="4.600" height="6.400" rx="1" fill="#fdbc45"/><ellipse cx="1511" cy="438.6" rx="4.200" ry="5.200" fill="#bd8c33"/><ellipse cx="1508.800" cy="439.1" rx="3" ry="3.700" fill="#fdbc45"/><ellipse cx="1468.600" cy="463.1" rx="4.200" ry="5.200" fill="#ad7f2e"/><rect x="1468.300" y="460.5" width="4.600" height="6.400" rx="1" fill="#fdbc45"/><ellipse cx="1511" cy="462.8" rx="4.200" ry="5.200" fill="#bd8c33"/><ellipse cx="1508.800" cy="463.3" rx="3" ry="3.700" fill="#fdbc45"/><ellipse cx="1468.600" cy="487.4" rx="4.200" ry="5.200" fill="#ad7f2e"/><rect x="1468.300" y="484.8" width="4.600" height="6.400" rx="1" fill="#fdbc45"/><ellipse cx="1511" cy="487.1" rx="4.200" ry="5.200" fill="#bd8c33"/><ellipse cx="1508.800" cy="487.6" rx="3" ry="3.700" fill="#fdbc45"/><ellipse cx="1468.600" cy="511.6" rx="4.200" ry="5.200" fill="#ad7f2e"/><rect x="1468.300" y="509.0" width="4.600" height="6.400" rx="1" fill="#fdbc45"/><ellipse cx="1511" cy="511.3" rx="4.200" ry="5.200" fill="#bd8c33"/><ellipse cx="1508.800" cy="511.8" rx="3" ry="3.700" fill="#fdbc45"/><rect x="1470.300" y="288.800" width="4.300" height="4.300" fill="#fdbc45"/><rect x="1505.200" y="288.800" width="4.300" height="4.300" fill="#fdbc45"/><path d="M1489.600 512 L1460 529 M1497 520 L1522 533" stroke="#b0a58c" stroke-width="1.400" fill="none"/><circle cx="1489.600" cy="512" r="2.600" fill="#9c9c9c"/><polygon points="1489.600,256.400 1531.300,280.100 1531.300,525 1489.600,548.600 1447.900,525 1447.900,280.100" fill="none" stroke="#fbbb45" stroke-width="2.800" stroke-linejoin="round"/><circle cx="1489.600" cy="536.500" r="3" fill="#fff" stroke="#aaa" stroke-width="1"/><circle cx="1447.500" cy="536.500" r="2.600" fill="#aaa"/><circle cx="1531.500" cy="536.500" r="2.600" fill="#aaa"/><circle cx="1489.600" cy="560.500" r="2.600" fill="#aaa"/></g><g id="planes"><ellipse cx="1427" cy="786.500" rx="224" ry="125" fill="none" stroke="#a6a6a6" stroke-width="1.600" stroke-dasharray="34 8 4 8"/><polygon points="1300.300,718.500 1552.800,864.100 1552.800,1155.900 1300.300,1010.200" fill="#cddcf0" fill-opacity=".2" stroke="#759cd3" stroke-opacity=".72" stroke-width="1.900" stroke-linejoin="round"/><polygon points="1552.800,718.500 1552.800,1010.200 1300.300,1155.900 1300.300,864.100" fill="#cddcf0" fill-opacity=".2" stroke="#759cd3" stroke-opacity=".72" stroke-width="1.900" stroke-linejoin="round"/><polygon points="1679.200,937.200 1426.700,1082.800 1175,937.200 1426.700,791.500" fill="#cddcf0" fill-opacity=".2" stroke="#759cd3" stroke-opacity=".72" stroke-width="1.900" stroke-linejoin="round"/><circle cx="1426.700" cy="791.500" r="2.600" fill="#999"/><polygon points="1426.700,840.300 1511,889.200 1511,985.600 1426.700,1033.600 1342,985.600 1342,889.200" fill="url(#cubeg)" stroke="#222" stroke-width="1.700" stroke-linejoin="round"/><path d="M1426.700 840.300 V1033.600 M1342 889.200 L1511 985.600 M1511 889.200 L1342 985.600" stroke="#222" stroke-width="1.600" fill="none"/><path d="M1352 912 Q1426 925 1500 912" stroke="#c3c4c6" stroke-width="1.200" fill="none" stroke-dasharray="10 4 2 4"/><circle cx="1426.700" cy="937.200" r="5" fill="#fff" stroke="#111" stroke-width="1.800"/><circle cx="1426.700" cy="937.200" r="2" fill="#111"/></g><g font-family="Liberation Sans, sans-serif" font-style="italic" fill="#3363c6" stroke="#3363c6" stroke-width=".35" font-size="18.500"><text transform="matrix(0.866 0.5 0 1 1302 738.300)" textLength="47.500">Front</text><text transform="matrix(0.866 0.5 -0.866 0.5 1413.700 801.200)" textLength="32.500" font-size="18">Top</text><text transform="matrix(0.866 -0.5 0 1 1303 879)" textLength="46.500">Right</text></g><g fill="none" stroke="#a6a6a6" stroke-width="1.600" stroke-dasharray="34 8 4 8"><ellipse cx="1784.400" cy="803.600" rx="59.700" ry="34.800"/><ellipse cx="1758.100" cy="923.800" rx="59.700" ry="34.800"/><ellipse cx="1815.700" cy="1039.800" rx="59.700" ry="34.800"/><polygon points="1867.900,730.600 1909.600,754.800 1867.900,779 1826.100,754.800"/></g><g fill="#9a9a9a"><circle cx="1784.400" cy="803.600" r="2.300"/><circle cx="1758.100" cy="923.800" r="2.300"/><circle cx="1815.700" cy="1039.800" r="2.300"/><circle cx="1867.900" cy="730.600" r="2.600"/><circle cx="1909.600" cy="754.800" r="2.600"/><circle cx="1867.900" cy="779" r="2.600"/><circle cx="1826.100" cy="754.800" r="2.600"/></g><circle cx="1867.900" cy="754.800" r="2.800" fill="#fff" stroke="#999" stroke-width="1.200"/></svg>
<div class="abs" style="left:307.500px;top:644px;width:40px;height:42.500px;border:1px solid #999;border-left:none;background:#fff;box-sizing:border-box"></div><svg class="abs" style="left:313px;top:654px" width="28" height="28" viewBox="0 0 28 28"><path d="M2.400 2.600 L6 6.300 L9.600 2.600" fill="none" stroke="#222" stroke-width="1.600"/><path d="M6 8.400 V24.700" stroke="#555" stroke-width="1.700"/><path d="M12.200 4 H24.900 M8.700 10.300 H24.900 M8.700 16.500 H24.900 M8.700 22.800 H24.900" stroke="#444" stroke-width="1.400"/></svg><svg class="abs" style="left:2180px;top:100px" width="216" height="216" viewBox="2180 100 216 216"><g fill="#e2e9f0"><polygon points="2285.400,115.300 2294,126.400 2277,126.400"/><polygon points="2277,290.500 2294,290.500 2285.400,301.500"/><polygon points="2192.800,208.300 2203.800,200.300 2203.800,217.300"/><polygon points="2378.100,208.300 2367,200.300 2367,217.300"/><path d="M2258.500 124.500 L2260.500 131.500 C2247 136 2236 143 2228.500 150.500 L2231.500 156.500 L2218.500 156 L2219.500 143.500 L2223.500 146.500 C2232 137.500 2244 129.500 2258.500 124.500 Z"/><path d="M2312.300 124.500 L2310.300 131.500 C2323.800 136 2334.800 143 2342.300 150.500 L2339.300 156.500 L2352.300 156 L2351.300 143.500 L2347.300 146.500 C2338.800 137.500 2326.800 129.500 2312.300 124.500 Z"/><path d="M2285.400 154.500 Q2288 154.500 2291 156 L2332 179.500 Q2336.500 182 2336.500 187 V229 Q2336.500 234 2332 236.500 L2291 261.500 Q2285.400 264.500 2279.800 261.500 L2239 236.500 Q2234.500 234 2234.500 229 V187 Q2234.500 182 2239 179.500 L2279.800 156 Q2283 154.500 2285.400 154.500 Z"/></g><g fill="#fff"><path d="M2285.400 159.500 Q2287 159.500 2289 160.600 L2315 175.500 Q2319 177.700 2315 180 L2289 195 Q2285.400 197 2281.800 195 L2256 180 Q2252 177.700 2256 175.500 L2281.800 160.600 Q2284 159.500 2285.400 159.500 Z"/><path d="M2240.400 199 Q2240.400 194.500 2244.500 197 L2276 215.500 Q2278.600 217 2278.600 220 V249 Q2278.600 254.500 2274.500 252 L2243.500 233.500 Q2240.400 231.500 2240.400 228 Z"/><path d="M2330.500 199 Q2330.500 194.500 2326.400 197 L2294.900 215.500 Q2292.300 217 2292.300 220 V249 Q2292.300 254.500 2296.400 252 L2327.400 233.500 Q2330.500 231.500 2330.500 228 Z"/><circle cx="2285.400" cy="207.500" r="8.500"/><ellipse cx="2285.400" cy="257" rx="8" ry="3.500"/><ellipse cx="2241.500" cy="183" rx="2.600" ry="6" transform="rotate(35 2241.500 183)"/><ellipse cx="2329.300" cy="183" rx="2.600" ry="6" transform="rotate(-35 2329.300 183)"/></g><path d="M2231.400 239.500 L2283.500 209.800" stroke="#bfe3bf" stroke-width="1.200"/><path d="M2231.400 239.500 L2243.500 232.600" stroke="#35a235" stroke-width="2"/><path d="M2231.400 240 V180" stroke="#4444dd" stroke-width="2"/><path d="M2231.400 239.500 L2283 269.300" stroke="#d83333" stroke-width="2"/><g font-family="Liberation Sans, sans-serif" font-weight="bold"><text x="2226.200" y="175.800" font-size="16.500" fill="#4444dd" textLength="9.500" lengthAdjust="spacingAndGlyphs">Z</text><text x="2287.700" y="281.200" font-size="16.500" fill="#d83333" textLength="10" lengthAdjust="spacingAndGlyphs">X</text><text x="2287.300" y="209.800" font-size="15" fill="#a9dba9" font-weight="normal" textLength="8.500" lengthAdjust="spacingAndGlyphs">Y</text></g><g font-family="Liberation Sans, sans-serif" font-style="italic" fill="#5a5a5a" font-size="11.500"><text transform="matrix(0.866 0.5 -0.5 0.5 2275.500 176)" x="0" y="0" font-size="13">Top</text><text transform="matrix(0.866 0.5 0 1 2246 218.500)" x="0" y="0" font-size="12.500">Front</text><text transform="matrix(0.866 -0.5 0 1 2300 233)" x="0" y="0" font-size="12.500">Right</text></g><g stroke="#333" stroke-width="1.100" stroke-linejoin="round"><polygon points="2341.800,280.400 2353,285.400 2353,297.400 2341.800,302.400 2330.600,297.400 2330.600,285.400" fill="#fff"/><polygon points="2330.600,285.400 2341.800,290.400 2341.800,302.400 2330.600,297.400" fill="#999"/><polygon points="2353,285.400 2341.800,290.400 2341.800,302.400 2353,297.400" fill="#ddd"/></g><polygon points="2363.300,288.800 2373,288.800 2368.200,294" fill="#222"/></svg><div class="abs" style="left:2358px;top:534.500px;width:40px;height:166.500px;border:1px solid #999;box-sizing:border-box;background:#fff"></div><div class="abs" style="left:2358px;top:576px;width:40px;height:1px;background:#999"></div><div class="abs" style="left:2358px;top:617.5px;width:40px;height:1px;background:#999"></div><div class="abs" style="left:2358px;top:658.5px;width:40px;height:1px;background:#999"></div><div class="abs" style="left:2358px;top:713px;width:40px;height:84px;border:1px solid #999;box-sizing:border-box;background:#fff"></div><div class="abs" style="left:2358px;top:754.500px;width:40px;height:1px;background:#999"></div><svg class="abs" style="left:2365px;top:543px" width="28" height="28" viewBox="0 0 28 28"><polygon points="4,18 13,2 17,4.500 9,19" fill="#777"/><polygon points="8,19 16,4 21,7.500 14,20" fill="#999"/><polygon points="13,20 20,7.500 24.500,12 20,20" fill="#bbb"/><rect x="2.500" y="19" width="23" height="6.500" rx="1.200" fill="#eee" stroke="#555" stroke-width="1"/><path d="M10.500 19 V25.500 M18.500 19 V25.500" stroke="#999" stroke-width=".8"/><circle cx="6" cy="22.200" r="1.300" fill="none" stroke="#444" stroke-width=".9"/></svg><svg class="abs" style="left:2365px;top:585px" width="28" height="28" viewBox="0 0 28 28"><g stroke="#333" stroke-width="1.300" fill="#fff" stroke-linejoin="round"><polygon points="15.500,5.500 24.500,9.500 24.500,20.500 15.500,24.500 6.500,20.500 6.500,9.500"/><path d="M6.500 9.500 L15.500 13.500 L24.500 9.500 M15.500 13.500 V24.500" fill="none"/></g><rect x="1" y="1.500" width="12.500" height="9.500" fill="#1d55b8"/><path d="M1 4.700 H13.500 M1 7.900 H13.500 M5.200 1.500 V11 M9.400 1.500 V11" stroke="#9bb8ea" stroke-width=".8"/></svg><svg class="abs" style="left:2365px;top:626px" width="28" height="28" viewBox="0 0 28 28"><g stroke="#333" stroke-width="1.200" fill="#fff" stroke-linejoin="round"><polygon points="14.500,8.500 21.500,11.500 21.500,19.500 14.500,22.500 7.500,19.500 7.500,11.500"/><path d="M7.500 11.500 L14.500 14.500 L21.500 11.500 M14.500 14.500 V22.500" fill="none"/></g><rect x="1" y="1.500" width="12.500" height="9" fill="#333"/><path d="M1 4.500 H13.500 M1 7.500 H13.500 M5.200 1.500 V10.500 M9.400 1.500 V10.500" stroke="#ccc" stroke-width=".8"/><path d="M6 12 Q3.500 12 4.500 15 Q5 17.500 3 18 Q5 18.500 4.500 21 Q3.500 24 6 24 M23 6 Q25.500 6 24.500 10 Q24 14.500 26 15 Q24 15.500 24.500 20 Q25.500 24 23 24" fill="none" stroke="#333" stroke-width="1.200"/></svg><svg class="abs" style="left:2360px;top:662px" width="36" height="34" viewBox="2360 662 36 34"><rect x="2366" y="668.200" width="12.300" height="9" fill="#333"/><path d="M2366 671.200 H2378.300 M2366 674.200 H2378.300 M2370.100 668.200 V677.200 M2374.200 668.200 V677.200" stroke="#ccc" stroke-width=".8"/><path d="M2369.500 670 Q2364 680 2369.500 690.500 M2386.500 669.500 Q2392.500 680 2386.500 690.500" fill="none" stroke="#222" stroke-width="2"/></svg><span class="t" style="left:2371.50px;top:662.14px;font-size:27px;font-weight:bold;font-style:italic;color:#222;font-family:'Liberation Serif',serif;">x</span><svg class="abs" style="left:2364px;top:718.500px" width="31" height="31" viewBox="0 0 31 31"><rect x=".5" y=".5" width="30" height="30" rx="3.500" fill="#dedede"/><path d="M15.500 15.500 L6.100 6.100 A13.300 13.300 0 0 1 24.900 6.100 Z" fill="#6cc04a"/><path d="M15.500 15.500 L24.900 6.100 A13.300 13.300 0 0 1 24.900 24.900 Z" fill="#3eb4ea"/><path d="M15.500 15.500 L24.900 24.900 A13.300 13.300 0 0 1 6.100 24.900 Z" fill="#f2b544"/><path d="M15.500 15.500 L6.100 24.900 A13.300 13.300 0 0 1 6.100 6.100 Z" fill="#de4a4a"/><path d="M6.100 6.100 L24.900 24.900 M24.900 6.100 L6.100 24.900" stroke="#dedede" stroke-width="1.500"/></svg><div class="abs" style="left:2364px;top:760px;width:31px;height:31px;background:#ddd;border-radius:3.500px"></div><div class="abs" style="left:2366.500px;top:762.500px;width:26px;height:26px;background:#0a5cf0;border:1.500px solid #111;box-sizing:border-box"></div><svg class="abs" style="left:2366px;top:762px" width="27" height="27" viewBox="2366 762 27 27"><text x="2369.600" y="784.300" font-family="Liberation Serif, serif" font-weight="bold" font-size="25.500" fill="#f6f6f6" stroke="#f6f6f6" stroke-width=".7" textLength="20.800" lengthAdjust="spacingAndGlyphs">MK</text></svg><svg class="abs" style="left:2274px;top:1229px" width="24" height="19" viewBox="0 0 24 19"><g fill="#fff" stroke="#222" stroke-width="1.500" stroke-linejoin="round"><path d="M1.800 10.800 H13 C17 10.800 21 9.500 21 6.500 V12 C21 15.500 17.500 16.800 14 16.800 H1.800 Z"/><ellipse cx="14.300" cy="6.400" rx="6.700" ry="4.200"/><ellipse cx="14.300" cy="6.400" rx="3.200" ry="1.700" fill="#ddd"/></g><path d="M4.500 14 V16.500 M7 13.500 V16.500 M9.500 14 V16.500 M12 13.500 V16.500 M14.500 14 V16.500 M17 13.300 V16" stroke="#222" stroke-width=".8"/></svg><svg class="abs" style="left:2315px;top:1229px" width="28" height="19" viewBox="0 0 28 19"><g fill="#fff" stroke="#222" stroke-width="1.600" stroke-linejoin="round"><path d="M2 17.200 C2 8 7 2.200 14 2.200 C21 2.200 26 8 26 17.200 Z"/><path d="M7 13.800 C7.500 9.500 10.500 7.800 14 7.800 C17.500 7.800 20.500 9.500 21 13.800 H16.800 C16 12 12 12 11.200 13.800 Z"/></g><path d="M4.500 13 l1.500 .3 M5.300 10 l1.400 .6 M7 7.300 l1.200 .9 M9.300 5.300 l.8 1.300 M12 4.300 l.4 1.500 M15 4.200 l-.3 1.500 M17.800 5 l-.7 1.300 M20.300 6.800 l-1.100 1 M22.200 9.500 l-1.400 .7 M23.300 12.600 l-1.500 .4" stroke="#222" stroke-width=".8"/></svg><svg class="abs" style="left:2362px;top:1228px" width="22" height="20" viewBox="0 0 22 20"><path d="M3.500 2 H18.500 M11 2 V17 M2 18.200 H20" stroke="#222" stroke-width="1.800" fill="none"/><path d="M4.500 2.500 L1.800 12 H7.200 Z M17.500 2.500 L14.800 12 H20.200 Z" fill="#fff" stroke="#222" stroke-width="1.200" stroke-linejoin="round"/><path d="M1.500 12.500 H7.500 M14.500 12.500 H20.500" stroke="#222" stroke-width="2"/></svg>
<div class="abs" id="frame"></div><div class="abs" id="blc3"></div>
</body></html>
